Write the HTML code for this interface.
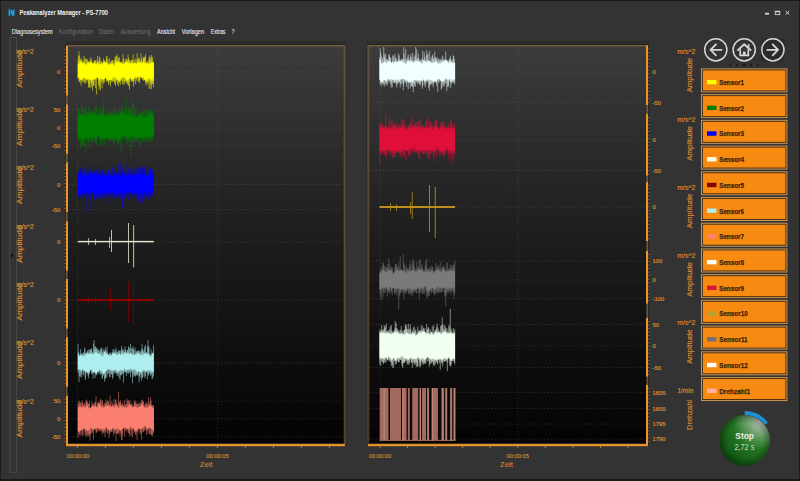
<!DOCTYPE html>
<html><head><meta charset="utf-8"><title>Peakanalyzer Manager</title>
<style>html,body{margin:0;padding:0;width:800px;height:481px;overflow:hidden;background:#333;font-family:"Liberation Sans",sans-serif}</style>
</head><body><svg width="800" height="481" viewBox="0 0 800 481" style="position:absolute;left:0;top:0;font-family:'Liberation Sans',sans-serif"><rect width="800" height="481" fill="#333333"/><rect x="0" y="0" width="800" height="1" fill="#1b1b1b"/><rect x="799" y="0" width="1" height="481" fill="#1b1b1b"/><rect x="0" y="479" width="800" height="2" fill="#1b1b1b"/><rect x="0" y="0" width="1" height="481" fill="#1b1b1b"/><rect x="8" y="9" width="7.3" height="6.8" fill="#1a5878"/><path d="M9.4 15.5 V10.2 M10.8 10.2 L12.2 14.2 L13.6 10.2 V15.5" stroke="#3c9fc8" stroke-width="1.2" fill="none"/><rect x="8.2" y="8.3" width="1" height="1.2" fill="#8a3a3a"/><text x="19.5" y="14.6" font-size="6.8" fill="#f2f2f2" font-weight="bold" text-anchor="start" textLength="88.5" lengthAdjust="spacingAndGlyphs" >Peakanalyzer Manager - PS-7700</text><rect x="765" y="12.8" width="4" height="1.8" fill="#d8d8d8"/><rect x="775.2" y="11.2" width="4.6" height="3.4" fill="none" stroke="#d0d0d0" stroke-width="0.9"/><rect x="775" y="11" width="5" height="1.3" fill="#d0d0d0"/><path d="M785.7 11 L789.3 14.5 M789.3 11 L785.7 14.5" stroke="#d8d8d8" stroke-width="1"/><text x="11.8" y="33.9" font-size="6.4" fill="#e6e6e6" font-weight="normal" text-anchor="start" textLength="40.8" lengthAdjust="spacingAndGlyphs" stroke="#e6e6e6" stroke-width="0.12" >Diagnosesystem</text><text x="58.8" y="33.9" font-size="6.4" fill="#727272" font-weight="normal" text-anchor="start" textLength="34.2" lengthAdjust="spacingAndGlyphs" >Konfiguration</text><text x="99.2" y="33.9" font-size="6.4" fill="#727272" font-weight="normal" text-anchor="start" textLength="15.0" lengthAdjust="spacingAndGlyphs" >Daten</text><text x="120.7" y="33.9" font-size="6.4" fill="#727272" font-weight="normal" text-anchor="start" textLength="30.0" lengthAdjust="spacingAndGlyphs" >Auswertung</text><text x="157" y="33.9" font-size="6.4" fill="#e6e6e6" font-weight="normal" text-anchor="start" textLength="18" lengthAdjust="spacingAndGlyphs" stroke="#e6e6e6" stroke-width="0.12" >Ansicht</text><text x="181.7" y="33.9" font-size="6.4" fill="#e6e6e6" font-weight="normal" text-anchor="start" textLength="22.5" lengthAdjust="spacingAndGlyphs" stroke="#e6e6e6" stroke-width="0.12" >Vorlagen</text><text x="210.7" y="33.9" font-size="6.4" fill="#e6e6e6" font-weight="normal" text-anchor="start" textLength="14.8" lengthAdjust="spacingAndGlyphs" stroke="#e6e6e6" stroke-width="0.12" >Extras</text><text x="231.7" y="33.9" font-size="6.4" fill="#e6e6e6" font-weight="normal" text-anchor="start" textLength="2.6" lengthAdjust="spacingAndGlyphs" stroke="#e6e6e6" stroke-width="0.12" >?</text><rect x="9.8" y="37.5" width="6.7" height="435" fill="none" stroke="#484848" stroke-width="1"/><path d="M11 253.2 L14 255.3 L11 257.4 Z" fill="#111"/><linearGradient id="gl" x1="0" y1="0" x2="0" y2="1"><stop offset="0" stop-color="#3c3c3c"/><stop offset="0.45" stop-color="#1f1f1f"/><stop offset="1" stop-color="#030303"/></linearGradient><rect x="66" y="46" width="278.5" height="399" fill="url(#gl)"/><rect x="65" y="41" width="281.5" height="4" fill="#262626" opacity="0.45"/><rect x="65.5" y="44.5" width="280.5" height="401" fill="none" stroke="#262626" stroke-width="1"/><rect x="66.5" y="45.5" width="278.5" height="399" fill="none" stroke="#72593c" stroke-width="1"/><rect x="67.5" y="46.5" width="276.5" height="397" fill="none" stroke="#8a6a44" stroke-width="1" stroke-opacity="0.4"/><linearGradient id="gr" x1="0" y1="0" x2="0" y2="1"><stop offset="0" stop-color="#3c3c3c"/><stop offset="0.45" stop-color="#1f1f1f"/><stop offset="1" stop-color="#030303"/></linearGradient><rect x="367.5" y="46" width="279.5" height="399" fill="url(#gr)"/><rect x="366.5" y="41" width="282.5" height="4" fill="#262626" opacity="0.45"/><rect x="367.0" y="44.5" width="281.5" height="401" fill="none" stroke="#262626" stroke-width="1"/><rect x="368.0" y="45.5" width="279.5" height="399" fill="none" stroke="#72593c" stroke-width="1"/><rect x="369.0" y="46.5" width="277.5" height="397" fill="none" stroke="#8a6a44" stroke-width="1" stroke-opacity="0.4"/><line x1="69" y1="71.8" x2="342.5" y2="71.8" stroke="#8a8a8a" stroke-opacity="0.42" stroke-width="0.8" stroke-dasharray="0.9 2.4"/><line x1="69" y1="128.1" x2="342.5" y2="128.1" stroke="#8a8a8a" stroke-opacity="0.42" stroke-width="0.8" stroke-dasharray="0.9 2.4"/><line x1="69" y1="184.5" x2="342.5" y2="184.5" stroke="#8a8a8a" stroke-opacity="0.42" stroke-width="0.8" stroke-dasharray="0.9 2.4"/><line x1="69" y1="242" x2="342.5" y2="242" stroke="#8a8a8a" stroke-opacity="0.42" stroke-width="0.8" stroke-dasharray="0.9 2.4"/><line x1="69" y1="300" x2="342.5" y2="300" stroke="#8a8a8a" stroke-opacity="0.42" stroke-width="0.8" stroke-dasharray="0.9 2.4"/><line x1="69" y1="363" x2="342.5" y2="363" stroke="#8a8a8a" stroke-opacity="0.42" stroke-width="0.8" stroke-dasharray="0.9 2.4"/><line x1="69" y1="418.8" x2="342.5" y2="418.8" stroke="#8a8a8a" stroke-opacity="0.42" stroke-width="0.8" stroke-dasharray="0.9 2.4"/><line x1="69" y1="110" x2="342.5" y2="110" stroke="#8a8a8a" stroke-opacity="0.42" stroke-width="0.8" stroke-dasharray="0.9 2.4"/><line x1="69" y1="145.6" x2="342.5" y2="145.6" stroke="#8a8a8a" stroke-opacity="0.42" stroke-width="0.8" stroke-dasharray="0.9 2.4"/><line x1="69" y1="209.5" x2="342.5" y2="209.5" stroke="#8a8a8a" stroke-opacity="0.42" stroke-width="0.8" stroke-dasharray="0.9 2.4"/><line x1="69" y1="401.2" x2="342.5" y2="401.2" stroke="#8a8a8a" stroke-opacity="0.42" stroke-width="0.8" stroke-dasharray="0.9 2.4"/><line x1="69" y1="436.8" x2="342.5" y2="436.8" stroke="#8a8a8a" stroke-opacity="0.42" stroke-width="0.8" stroke-dasharray="0.9 2.4"/><line x1="77.6" y1="48" x2="77.6" y2="443" stroke="#8a8a8a" stroke-opacity="0.38" stroke-width="0.8" stroke-dasharray="0.9 2.4"/><line x1="217.6" y1="48" x2="217.6" y2="443" stroke="#8a8a8a" stroke-opacity="0.38" stroke-width="0.8" stroke-dasharray="0.9 2.4"/><line x1="369.5" y1="72" x2="645" y2="72" stroke="#8a8a8a" stroke-opacity="0.42" stroke-width="0.8" stroke-dasharray="0.9 2.4"/><line x1="369.5" y1="140" x2="645" y2="140" stroke="#8a8a8a" stroke-opacity="0.42" stroke-width="0.8" stroke-dasharray="0.9 2.4"/><line x1="369.5" y1="207" x2="645" y2="207" stroke="#8a8a8a" stroke-opacity="0.42" stroke-width="0.8" stroke-dasharray="0.9 2.4"/><line x1="369.5" y1="280" x2="645" y2="280" stroke="#8a8a8a" stroke-opacity="0.42" stroke-width="0.8" stroke-dasharray="0.9 2.4"/><line x1="369.5" y1="345.8" x2="645" y2="345.8" stroke="#8a8a8a" stroke-opacity="0.42" stroke-width="0.8" stroke-dasharray="0.9 2.4"/><line x1="369.5" y1="408.5" x2="645" y2="408.5" stroke="#8a8a8a" stroke-opacity="0.42" stroke-width="0.8" stroke-dasharray="0.9 2.4"/><line x1="369.5" y1="102.5" x2="645" y2="102.5" stroke="#8a8a8a" stroke-opacity="0.42" stroke-width="0.8" stroke-dasharray="0.9 2.4"/><line x1="369.5" y1="170.5" x2="645" y2="170.5" stroke="#8a8a8a" stroke-opacity="0.42" stroke-width="0.8" stroke-dasharray="0.9 2.4"/><line x1="369.5" y1="261" x2="645" y2="261" stroke="#8a8a8a" stroke-opacity="0.42" stroke-width="0.8" stroke-dasharray="0.9 2.4"/><line x1="369.5" y1="298.8" x2="645" y2="298.8" stroke="#8a8a8a" stroke-opacity="0.42" stroke-width="0.8" stroke-dasharray="0.9 2.4"/><line x1="369.5" y1="324.5" x2="645" y2="324.5" stroke="#8a8a8a" stroke-opacity="0.42" stroke-width="0.8" stroke-dasharray="0.9 2.4"/><line x1="369.5" y1="367.5" x2="645" y2="367.5" stroke="#8a8a8a" stroke-opacity="0.42" stroke-width="0.8" stroke-dasharray="0.9 2.4"/><line x1="369.5" y1="392.5" x2="645" y2="392.5" stroke="#8a8a8a" stroke-opacity="0.42" stroke-width="0.8" stroke-dasharray="0.9 2.4"/><line x1="369.5" y1="424" x2="645" y2="424" stroke="#8a8a8a" stroke-opacity="0.42" stroke-width="0.8" stroke-dasharray="0.9 2.4"/><line x1="369.5" y1="439.2" x2="645" y2="439.2" stroke="#8a8a8a" stroke-opacity="0.42" stroke-width="0.8" stroke-dasharray="0.9 2.4"/><line x1="380" y1="48" x2="380" y2="443" stroke="#8a8a8a" stroke-opacity="0.38" stroke-width="0.8" stroke-dasharray="0.9 2.4"/><line x1="517.8" y1="48" x2="517.8" y2="443" stroke="#8a8a8a" stroke-opacity="0.38" stroke-width="0.8" stroke-dasharray="0.9 2.4"/><clipPath id="cl"><rect x="66" y="47" width="278" height="397"/></clipPath><clipPath id="cr"><rect x="369" y="47" width="277" height="397"/></clipPath><g clip-path="url(#cl)"><path d="M77.80 64.0 L78.05 64.0 L78.55 63.7 L79.05 63.0 L79.55 63.5 L80.05 61.6 L80.55 61.3 L81.05 62.8 L81.55 63.1 L82.05 63.1 L82.55 63.5 L83.05 62.8 L83.55 63.0 L84.05 64.1 L84.55 63.4 L85.05 64.3 L85.55 65.1 L86.05 65.1 L86.55 64.4 L87.05 63.3 L87.55 63.5 L88.05 63.1 L88.55 63.0 L89.05 63.5 L89.55 63.2 L90.05 61.2 L90.55 61.5 L91.05 63.0 L91.55 62.2 L92.05 63.1 L92.55 63.4 L93.05 63.0 L93.55 63.6 L94.05 63.6 L94.55 62.9 L95.05 64.8 L95.55 63.0 L96.05 64.3 L96.55 64.2 L97.05 63.5 L97.55 63.0 L98.05 64.6 L98.55 63.6 L99.05 64.7 L99.55 64.0 L100.05 62.9 L100.55 64.0 L101.05 64.7 L101.55 63.9 L102.05 64.2 L102.55 65.1 L103.05 62.9 L103.55 62.8 L104.05 62.5 L104.55 61.5 L105.05 62.5 L105.55 62.9 L106.05 63.1 L106.55 62.8 L107.05 63.3 L107.55 64.3 L108.05 64.5 L108.55 64.9 L109.05 64.5 L109.55 64.7 L110.05 64.3 L110.55 64.2 L111.05 63.9 L111.55 63.4 L112.05 63.1 L112.55 64.3 L113.05 63.9 L113.55 65.1 L114.05 65.9 L114.55 64.9 L115.05 63.5 L115.55 63.1 L116.05 62.8 L116.55 61.7 L117.05 61.5 L117.55 61.9 L118.05 61.4 L118.55 61.8 L119.05 62.2 L119.55 62.6 L120.05 63.5 L120.55 62.3 L121.05 63.5 L121.55 62.7 L122.05 63.9 L122.55 64.2 L123.05 64.0 L123.55 63.8 L124.05 64.2 L124.55 62.9 L125.05 62.4 L125.55 62.3 L126.05 63.0 L126.55 62.3 L127.05 62.3 L127.55 62.0 L128.05 61.7 L128.55 63.5 L129.05 62.2 L129.55 63.1 L130.05 64.9 L130.55 63.5 L131.05 61.2 L131.55 62.2 L132.05 64.0 L132.55 62.5 L133.05 62.8 L133.55 63.9 L134.05 63.2 L134.55 63.1 L135.05 62.5 L135.55 64.2 L136.05 62.1 L136.55 64.2 L137.05 62.9 L137.55 62.5 L138.05 61.8 L138.55 61.5 L139.05 63.3 L139.55 62.9 L140.05 62.7 L140.55 62.1 L141.05 62.2 L141.55 62.6 L142.05 62.7 L142.55 63.0 L143.05 62.1 L143.55 61.1 L144.05 61.8 L144.55 63.1 L145.05 62.7 L145.55 62.9 L146.05 64.3 L146.55 63.0 L147.05 61.6 L147.55 63.2 L148.05 64.1 L148.55 63.7 L149.05 63.2 L149.55 64.1 L150.05 63.7 L150.55 63.6 L151.05 62.4 L151.55 62.5 L152.05 63.2 L152.55 62.3 L153.05 62.5 L153.55 62.9 L153.80 62.9 L153.80 80.6 L153.55 80.6 L153.05 81.0 L152.55 78.5 L152.05 79.1 L151.55 80.7 L151.05 78.1 L150.55 79.8 L150.05 81.0 L149.55 77.6 L149.05 78.4 L148.55 78.9 L148.05 79.3 L147.55 78.5 L147.05 79.4 L146.55 80.7 L146.05 80.6 L145.55 80.1 L145.05 80.4 L144.55 79.3 L144.05 78.8 L143.55 77.0 L143.05 77.1 L142.55 77.6 L142.05 77.5 L141.55 77.9 L141.05 76.7 L140.55 76.5 L140.05 77.1 L139.55 77.4 L139.05 77.6 L138.55 77.0 L138.05 75.8 L137.55 77.0 L137.05 77.3 L136.55 78.1 L136.05 77.6 L135.55 76.1 L135.05 77.8 L134.55 77.7 L134.05 78.1 L133.55 79.1 L133.05 80.4 L132.55 79.3 L132.05 78.8 L131.55 79.0 L131.05 79.0 L130.55 77.1 L130.05 77.2 L129.55 79.2 L129.05 79.0 L128.55 78.9 L128.05 80.6 L127.55 80.7 L127.05 80.3 L126.55 80.1 L126.05 79.4 L125.55 78.2 L125.05 78.6 L124.55 78.2 L124.05 77.4 L123.55 77.6 L123.05 76.7 L122.55 77.5 L122.05 77.5 L121.55 78.1 L121.05 78.5 L120.55 80.2 L120.05 79.3 L119.55 81.4 L119.05 81.0 L118.55 79.5 L118.05 80.0 L117.55 79.5 L117.05 79.4 L116.55 79.7 L116.05 78.2 L115.55 78.0 L115.05 77.5 L114.55 76.9 L114.05 77.3 L113.55 78.0 L113.05 76.7 L112.55 80.0 L112.05 78.6 L111.55 80.1 L111.05 79.5 L110.55 79.9 L110.05 79.2 L109.55 80.2 L109.05 80.5 L108.55 80.3 L108.05 80.0 L107.55 78.8 L107.05 79.7 L106.55 79.4 L106.05 77.5 L105.55 77.8 L105.05 78.6 L104.55 79.3 L104.05 78.7 L103.55 79.7 L103.05 80.8 L102.55 78.7 L102.05 79.2 L101.55 78.9 L101.05 78.8 L100.55 78.3 L100.05 79.1 L99.55 79.3 L99.05 79.8 L98.55 78.1 L98.05 77.7 L97.55 77.7 L97.05 76.8 L96.55 77.1 L96.05 78.6 L95.55 78.3 L95.05 78.7 L94.55 79.4 L94.05 79.7 L93.55 79.3 L93.05 80.0 L92.55 79.3 L92.05 80.1 L91.55 80.5 L91.05 81.6 L90.55 79.1 L90.05 80.3 L89.55 79.5 L89.05 79.2 L88.55 79.0 L88.05 79.8 L87.55 79.3 L87.05 79.4 L86.55 79.7 L86.05 78.7 L85.55 77.4 L85.05 78.5 L84.55 76.9 L84.05 78.2 L83.55 77.4 L83.05 78.5 L82.55 78.8 L82.05 79.0 L81.55 79.8 L81.05 80.0 L80.55 79.4 L80.05 80.0 L79.55 79.1 L79.05 76.8 L78.55 77.2 L78.05 78.1 L77.80 78.1 Z" fill="#ffff00"/><path d="M78.05 60.1V78.5M78.55 55.4V78.7M79.05 51.6V81.7M79.55 56.2V81.0M80.05 60.2V83.0M80.55 60.1V80.2M81.05 57.7V85.8M81.55 59.3V80.9M82.05 60.0V79.6M82.55 62.1V82.2M83.05 62.3V79.8M83.55 61.2V82.0M84.05 55.9V78.5M84.55 58.9V83.7M85.05 62.2V79.3M85.55 58.0V81.6M86.05 63.9V83.3M86.55 59.0V80.6M87.05 59.1V79.4M87.55 60.2V79.4M88.05 62.1V82.8M88.55 61.1V87.7M89.05 61.6V85.3M89.55 62.5V87.3M90.05 58.5V87.9M90.55 61.3V80.2M91.05 57.3V83.8M91.55 60.1V87.4M92.05 62.8V83.4M92.55 62.7V91.0M93.05 62.3V85.9M93.55 63.4V86.2M94.05 60.5V85.5M94.55 60.8V79.8M95.05 60.1V79.2M95.55 60.4V88.3M96.05 62.1V79.2M96.55 63.1V94.4M97.05 60.1V78.0M97.55 55.8V77.8M98.05 61.7V79.8M98.55 60.7V84.8M99.05 62.5V89.6M99.55 56.5V86.9M100.05 57.9V82.9M100.55 63.9V90.1M101.05 60.8V79.4M101.55 61.9V81.9M102.05 61.8V88.2M102.55 62.8V79.4M103.05 62.6V84.1M103.55 58.3V82.4M104.05 60.3V79.2M104.55 61.1V82.6M105.05 61.4V79.2M105.55 62.9V77.9M106.05 59.9V78.1M106.55 56.4V81.8M107.05 56.0V81.5M107.55 62.0V81.1M108.05 58.9V80.9M108.55 63.3V84.9M109.05 64.2V83.7M109.55 58.3V80.3M110.05 64.1V80.3M110.55 62.1V86.6M111.05 62.5V82.3M111.55 60.6V80.2M112.05 60.5V82.0M112.55 60.3V81.6M113.05 60.4V78.3M113.55 62.9V81.6M114.05 65.1V81.3M114.55 59.9V83.2M115.05 56.8V84.4M115.55 56.5V85.9M116.05 59.9V79.8M116.55 55.9V81.3M117.05 54.2V79.6M117.55 61.4V84.3M118.05 56.8V82.2M118.55 58.5V86.1M119.05 61.9V82.7M119.55 57.2V82.6M120.05 63.4V81.1M120.55 61.8V84.7M121.05 62.4V80.3M121.55 62.5V81.0M122.05 60.5V79.3M122.55 62.0V83.3M123.05 54.2V84.7M123.55 58.2V78.5M124.05 63.7V84.8M124.55 62.1V82.3M125.05 59.2V80.9M125.55 61.2V80.9M126.05 58.7V82.8M126.55 59.3V82.0M127.05 59.5V83.8M127.55 61.3V83.5M128.05 54.3V85.6M128.55 57.5V86.2M129.05 60.1V81.8M129.55 59.4V89.8M130.05 63.5V77.3M130.55 62.3V79.3M131.05 59.9V81.4M131.55 59.9V81.3M132.05 63.9V80.0M132.55 59.9V82.0M133.05 54.5V81.9M133.55 63.3V86.5M134.05 60.1V81.3M134.55 62.0V79.1M135.05 58.3V77.9M135.55 63.3V84.0M136.05 59.9V78.9M136.55 64.1V80.6M137.05 53.2V77.4M137.55 59.9V77.7M138.05 58.1V82.4M138.55 57.7V80.9M139.05 60.3V80.7M139.55 58.3V83.1M140.05 61.3V80.1M140.55 61.9V76.8M141.05 53.1V77.4M141.55 58.6V78.0M142.05 60.2V79.0M142.55 62.9V80.1M143.05 56.8V79.1M143.55 58.3V80.7M144.05 56.7V80.2M144.55 57.6V79.8M145.05 56.6V80.6M145.55 54.2V82.8M146.05 64.1V85.4M146.55 62.8V81.9M147.05 60.8V82.7M147.55 62.6V84.7M148.05 63.9V82.5M148.55 60.9V81.5M149.05 57.1V88.7M149.55 57.8V80.2M150.05 55.3V89.4M150.55 61.1V83.6M151.05 58.1V84.7M151.55 55.2V88.9M152.05 60.9V82.6M152.55 57.0V84.4M153.05 62.4V83.9M153.55 61.5V87.3" fill="none" stroke="#ffff00" stroke-width="0.6" stroke-opacity="0.85"/><path d="M77.80 114.4 L78.05 114.4 L78.55 115.8 L79.05 115.9 L79.55 116.2 L80.05 115.4 L80.55 115.5 L81.05 116.2 L81.55 115.0 L82.05 115.6 L82.55 115.6 L83.05 115.4 L83.55 116.3 L84.05 115.2 L84.55 116.1 L85.05 114.5 L85.55 116.4 L86.05 115.3 L86.55 115.5 L87.05 116.2 L87.55 117.6 L88.05 115.0 L88.55 115.0 L89.05 115.0 L89.55 113.8 L90.05 114.9 L90.55 113.2 L91.05 114.4 L91.55 113.0 L92.05 115.0 L92.55 115.1 L93.05 115.6 L93.55 114.9 L94.05 114.4 L94.55 115.3 L95.05 113.7 L95.55 114.8 L96.05 114.6 L96.55 116.1 L97.05 116.5 L97.55 118.3 L98.05 116.7 L98.55 114.8 L99.05 115.1 L99.55 115.0 L100.05 115.1 L100.55 115.2 L101.05 115.4 L101.55 115.1 L102.05 115.3 L102.55 115.1 L103.05 114.7 L103.55 114.9 L104.05 114.5 L104.55 115.1 L105.05 115.8 L105.55 116.5 L106.05 117.4 L106.55 115.5 L107.05 115.6 L107.55 114.6 L108.05 114.3 L108.55 115.2 L109.05 115.5 L109.55 115.4 L110.05 116.5 L110.55 115.7 L111.05 114.8 L111.55 115.3 L112.05 115.4 L112.55 115.1 L113.05 114.8 L113.55 114.0 L114.05 115.1 L114.55 116.5 L115.05 116.9 L115.55 115.5 L116.05 116.9 L116.55 115.5 L117.05 113.7 L117.55 115.4 L118.05 115.9 L118.55 115.3 L119.05 115.3 L119.55 114.9 L120.05 113.5 L120.55 113.3 L121.05 112.4 L121.55 113.6 L122.05 112.6 L122.55 112.8 L123.05 114.0 L123.55 115.1 L124.05 113.6 L124.55 114.7 L125.05 114.3 L125.55 114.0 L126.05 114.0 L126.55 114.6 L127.05 115.0 L127.55 114.7 L128.05 114.9 L128.55 115.5 L129.05 115.8 L129.55 116.4 L130.05 116.9 L130.55 115.9 L131.05 115.3 L131.55 114.3 L132.05 114.6 L132.55 114.8 L133.05 116.2 L133.55 114.8 L134.05 116.5 L134.55 117.6 L135.05 117.6 L135.55 116.8 L136.05 116.6 L136.55 116.8 L137.05 115.7 L137.55 117.3 L138.05 116.2 L138.55 117.0 L139.05 116.8 L139.55 115.3 L140.05 114.4 L140.55 114.4 L141.05 113.9 L141.55 114.0 L142.05 115.0 L142.55 115.7 L143.05 116.7 L143.55 116.6 L144.05 116.6 L144.55 115.8 L145.05 116.4 L145.55 117.2 L146.05 117.5 L146.55 116.1 L147.05 116.2 L147.55 116.1 L148.05 116.0 L148.55 116.2 L149.05 116.2 L149.55 115.7 L150.05 115.1 L150.55 113.1 L151.05 112.9 L151.55 113.2 L152.05 113.9 L152.55 113.9 L153.05 115.2 L153.55 115.8 L153.80 115.8 L153.80 135.7 L153.55 135.7 L153.05 135.5 L152.55 135.9 L152.05 136.0 L151.55 136.4 L151.05 136.9 L150.55 137.1 L150.05 136.3 L149.55 137.6 L149.05 136.9 L148.55 137.7 L148.05 136.3 L147.55 137.5 L147.05 135.8 L146.55 136.8 L146.05 137.0 L145.55 137.0 L145.05 136.3 L144.55 137.2 L144.05 136.4 L143.55 137.0 L143.05 136.8 L142.55 138.5 L142.05 137.2 L141.55 136.3 L141.05 136.2 L140.55 136.6 L140.05 136.9 L139.55 136.5 L139.05 137.3 L138.55 137.5 L138.05 137.2 L137.55 136.8 L137.05 137.1 L136.55 137.2 L136.05 135.9 L135.55 136.4 L135.05 135.7 L134.55 136.3 L134.05 136.9 L133.55 137.4 L133.05 136.7 L132.55 137.9 L132.05 136.0 L131.55 136.2 L131.05 135.3 L130.55 137.0 L130.05 136.0 L129.55 137.6 L129.05 137.4 L128.55 137.7 L128.05 137.9 L127.55 137.4 L127.05 136.1 L126.55 136.1 L126.05 135.5 L125.55 136.6 L125.05 136.9 L124.55 136.2 L124.05 136.8 L123.55 136.6 L123.05 134.8 L122.55 135.5 L122.05 135.3 L121.55 135.3 L121.05 138.5 L120.55 137.1 L120.05 138.5 L119.55 139.7 L119.05 138.4 L118.55 138.5 L118.05 138.7 L117.55 138.2 L117.05 138.1 L116.55 138.1 L116.05 137.1 L115.55 137.2 L115.05 137.9 L114.55 136.9 L114.05 137.7 L113.55 139.4 L113.05 140.0 L112.55 138.2 L112.05 138.1 L111.55 139.1 L111.05 140.1 L110.55 138.2 L110.05 139.8 L109.55 137.5 L109.05 137.9 L108.55 138.3 L108.05 137.2 L107.55 136.7 L107.05 136.5 L106.55 137.3 L106.05 138.1 L105.55 138.4 L105.05 137.7 L104.55 138.3 L104.05 139.0 L103.55 137.8 L103.05 138.9 L102.55 137.2 L102.05 136.3 L101.55 136.3 L101.05 137.5 L100.55 138.1 L100.05 137.0 L99.55 137.2 L99.05 136.6 L98.55 134.8 L98.05 135.8 L97.55 136.8 L97.05 135.7 L96.55 137.9 L96.05 138.7 L95.55 139.0 L95.05 137.3 L94.55 137.9 L94.05 136.4 L93.55 137.2 L93.05 138.2 L92.55 137.8 L92.05 139.1 L91.55 139.2 L91.05 139.5 L90.55 137.0 L90.05 137.4 L89.55 139.6 L89.05 138.0 L88.55 138.5 L88.05 137.8 L87.55 138.2 L87.05 137.8 L86.55 137.6 L86.05 138.1 L85.55 137.9 L85.05 137.0 L84.55 138.6 L84.05 138.2 L83.55 138.6 L83.05 139.2 L82.55 139.7 L82.05 139.0 L81.55 140.1 L81.05 138.1 L80.55 138.7 L80.05 136.9 L79.55 136.9 L79.05 136.9 L78.55 136.9 L78.05 135.9 L77.80 135.9 Z" fill="#008000"/><path d="M78.05 112.6V141.3M78.55 108.1V140.4M79.05 110.7V139.7M79.55 111.8V141.0M80.05 113.1V141.0M80.55 114.0V148.1M81.05 113.2V139.4M81.55 103.0V147.9M82.05 113.5V144.2M82.55 107.1V145.2M83.05 113.6V143.7M83.55 108.2V146.4M84.05 114.6V141.4M84.55 114.2V146.8M85.05 104.8V139.5M85.55 110.2V138.5M86.05 111.0V152.1M86.55 109.5V140.0M87.05 113.2V141.0M87.55 111.4V139.7M88.05 112.1V142.9M88.55 106.9V142.4M89.05 112.6V141.3M89.55 106.9V147.8M90.05 111.8V138.9M90.55 112.1V138.5M91.05 111.6V140.8M91.55 112.8V146.4M92.05 114.6V142.2M92.55 109.4V138.7M93.05 112.0V142.4M93.55 110.7V137.2M94.05 111.2V140.7M94.55 112.0V141.6M95.05 106.8V139.7M95.55 114.0V143.9M96.05 104.5V143.9M96.55 108.2V145.3M97.05 114.4V139.4M97.55 118.0V138.0M98.05 116.0V136.9M98.55 112.5V135.6M99.05 109.0V140.5M99.55 112.4V137.5M100.05 114.0V139.8M100.55 109.2V144.8M101.05 112.1V142.5M101.55 113.4V139.6M102.05 109.9V143.2M102.55 113.0V140.5M103.05 97.6V146.7M103.55 111.4V138.3M104.05 104.7V139.1M104.55 114.6V145.1M105.05 115.6V137.9M105.55 114.0V140.0M106.05 116.7V140.9M106.55 115.1V140.2M107.05 115.1V138.0M107.55 113.2V140.3M108.05 110.2V139.8M108.55 113.4V140.2M109.05 110.6V139.7M109.55 112.4V143.6M110.05 111.7V141.3M110.55 112.7V138.8M111.05 112.9V140.4M111.55 110.7V141.5M112.05 113.3V138.7M112.55 113.2V139.5M113.05 114.8V142.6M113.55 111.2V143.8M114.05 114.9V141.6M114.55 110.2V144.6M115.05 116.8V142.4M115.55 106.6V139.3M116.05 111.2V139.4M116.55 113.3V140.8M117.05 111.3V140.3M117.55 113.3V144.1M118.05 115.4V143.5M118.55 114.1V142.8M119.05 112.1V143.3M119.55 109.6V141.1M120.05 112.6V143.6M120.55 111.3V139.5M121.05 110.3V151.9M121.55 109.6V137.0M122.05 105.8V137.1M122.55 106.6V141.1M123.05 113.7V139.7M123.55 114.8V136.9M124.05 109.6V138.8M124.55 110.2V137.6M125.05 111.4V139.4M125.55 112.5V139.9M126.05 110.6V137.3M126.55 98.5V144.1M127.05 108.5V139.7M127.55 113.0V141.3M128.05 112.6V142.6M128.55 107.6V141.6M129.05 111.9V137.5M129.55 108.5V138.7M130.05 111.3V147.8M130.55 110.8V137.3M131.05 107.0V156.0M131.55 109.9V142.4M132.05 113.2V138.5M132.55 100.4V140.7M133.05 116.1V138.8M133.55 103.6V147.0M134.05 115.6V140.8M134.55 114.1V138.3M135.05 108.1V141.1M135.55 109.2V139.9M136.05 107.8V142.5M136.55 116.2V140.2M137.05 115.6V139.8M137.55 115.4V137.6M138.05 110.4V142.9M138.55 116.9V138.6M139.05 114.0V139.2M139.55 114.4V138.9M140.05 111.6V147.1M140.55 113.5V139.8M141.05 111.6V138.1M141.55 113.1V143.6M142.05 113.6V138.3M142.55 111.5V142.0M143.05 115.6V139.7M143.55 110.3V141.1M144.05 110.2V137.6M144.55 114.8V140.2M145.05 109.3V142.6M145.55 115.7V139.5M146.05 115.7V139.0M146.55 110.1V141.8M147.05 115.9V137.1M147.55 110.2V142.4M148.05 114.5V140.3M148.55 111.9V139.2M149.05 110.0V140.3M149.55 113.6V139.5M150.05 114.7V141.6M150.55 109.3V138.6M151.05 111.2V143.0M151.55 109.6V137.9M152.05 109.9V142.9M152.55 110.0V138.7M153.05 111.6V137.7M153.55 113.8V136.3" fill="none" stroke="#008000" stroke-width="0.6" stroke-opacity="0.85"/><path d="M77.80 174.7 L78.05 174.7 L78.55 174.2 L79.05 172.8 L79.55 173.1 L80.05 173.0 L80.55 173.2 L81.05 173.6 L81.55 173.1 L82.05 174.2 L82.55 174.6 L83.05 173.8 L83.55 174.9 L84.05 174.9 L84.55 174.7 L85.05 175.9 L85.55 176.8 L86.05 176.6 L86.55 177.3 L87.05 177.1 L87.55 176.6 L88.05 173.5 L88.55 174.1 L89.05 173.2 L89.55 174.2 L90.05 172.9 L90.55 173.2 L91.05 173.9 L91.55 175.8 L92.05 174.3 L92.55 173.4 L93.05 173.8 L93.55 176.6 L94.05 174.7 L94.55 174.2 L95.05 175.3 L95.55 175.7 L96.05 175.4 L96.55 174.4 L97.05 174.5 L97.55 175.3 L98.05 174.7 L98.55 174.5 L99.05 174.9 L99.55 173.7 L100.05 175.3 L100.55 175.6 L101.05 174.5 L101.55 175.9 L102.05 176.0 L102.55 176.0 L103.05 175.2 L103.55 175.4 L104.05 174.3 L104.55 174.3 L105.05 175.0 L105.55 175.1 L106.05 176.9 L106.55 175.7 L107.05 176.1 L107.55 176.5 L108.05 175.8 L108.55 175.2 L109.05 174.0 L109.55 174.7 L110.05 174.8 L110.55 175.4 L111.05 175.1 L111.55 176.6 L112.05 177.2 L112.55 176.0 L113.05 175.9 L113.55 175.0 L114.05 175.4 L114.55 174.2 L115.05 175.6 L115.55 175.1 L116.05 175.9 L116.55 175.9 L117.05 176.4 L117.55 175.6 L118.05 174.9 L118.55 175.3 L119.05 175.5 L119.55 174.7 L120.05 176.0 L120.55 174.8 L121.05 173.5 L121.55 172.8 L122.05 173.0 L122.55 172.8 L123.05 173.4 L123.55 174.8 L124.05 174.1 L124.55 176.0 L125.05 175.5 L125.55 176.2 L126.05 176.5 L126.55 175.7 L127.05 173.9 L127.55 174.1 L128.05 175.0 L128.55 174.3 L129.05 175.7 L129.55 175.6 L130.05 175.5 L130.55 174.6 L131.05 174.0 L131.55 174.7 L132.05 175.2 L132.55 175.4 L133.05 175.8 L133.55 174.9 L134.05 174.8 L134.55 174.9 L135.05 175.3 L135.55 176.2 L136.05 175.2 L136.55 175.2 L137.05 174.6 L137.55 175.0 L138.05 174.4 L138.55 173.9 L139.05 173.2 L139.55 174.1 L140.05 173.0 L140.55 175.0 L141.05 176.4 L141.55 175.4 L142.05 174.9 L142.55 174.1 L143.05 174.3 L143.55 173.4 L144.05 173.8 L144.55 174.2 L145.05 174.6 L145.55 175.3 L146.05 176.1 L146.55 175.8 L147.05 176.5 L147.55 176.6 L148.05 176.3 L148.55 175.8 L149.05 175.1 L149.55 174.0 L150.05 173.9 L150.55 172.6 L151.05 174.1 L151.55 174.3 L152.05 173.6 L152.55 173.8 L153.05 174.8 L153.55 175.5 L153.80 175.5 L153.80 191.4 L153.55 191.4 L153.05 189.6 L152.55 190.9 L152.05 191.4 L151.55 192.2 L151.05 192.2 L150.55 192.4 L150.05 193.0 L149.55 193.8 L149.05 192.8 L148.55 192.5 L148.05 193.2 L147.55 193.8 L147.05 193.6 L146.55 193.7 L146.05 192.8 L145.55 193.3 L145.05 192.5 L144.55 191.5 L144.05 192.9 L143.55 193.7 L143.05 193.8 L142.55 194.6 L142.05 195.3 L141.55 193.1 L141.05 193.1 L140.55 193.7 L140.05 193.5 L139.55 193.1 L139.05 194.1 L138.55 193.9 L138.05 192.9 L137.55 192.8 L137.05 192.5 L136.55 191.3 L136.05 192.0 L135.55 192.2 L135.05 191.9 L134.55 193.0 L134.05 193.7 L133.55 192.2 L133.05 192.0 L132.55 192.9 L132.05 192.3 L131.55 190.9 L131.05 193.6 L130.55 191.3 L130.05 191.7 L129.55 191.4 L129.05 192.2 L128.55 191.8 L128.05 192.7 L127.55 191.6 L127.05 191.1 L126.55 192.9 L126.05 192.7 L125.55 192.9 L125.05 193.9 L124.55 194.1 L124.05 192.6 L123.55 193.2 L123.05 193.2 L122.55 192.4 L122.05 193.3 L121.55 192.5 L121.05 192.8 L120.55 191.9 L120.05 192.7 L119.55 194.0 L119.05 193.3 L118.55 194.0 L118.05 192.8 L117.55 191.7 L117.05 192.6 L116.55 192.5 L116.05 192.7 L115.55 194.7 L115.05 194.9 L114.55 194.0 L114.05 194.2 L113.55 194.1 L113.05 193.1 L112.55 192.7 L112.05 193.3 L111.55 192.9 L111.05 192.5 L110.55 192.4 L110.05 191.6 L109.55 192.2 L109.05 193.4 L108.55 193.5 L108.05 193.3 L107.55 193.9 L107.05 191.9 L106.55 192.4 L106.05 192.7 L105.55 192.5 L105.05 192.8 L104.55 192.3 L104.05 192.0 L103.55 191.7 L103.05 192.3 L102.55 192.0 L102.05 193.5 L101.55 193.4 L101.05 194.0 L100.55 193.5 L100.05 193.6 L99.55 193.9 L99.05 195.9 L98.55 194.9 L98.05 194.7 L97.55 193.8 L97.05 194.2 L96.55 192.1 L96.05 193.6 L95.55 193.3 L95.05 194.8 L94.55 193.8 L94.05 194.5 L93.55 193.9 L93.05 193.1 L92.55 192.3 L92.05 192.6 L91.55 192.4 L91.05 191.5 L90.55 191.0 L90.05 191.6 L89.55 191.7 L89.05 194.0 L88.55 192.2 L88.05 193.0 L87.55 193.4 L87.05 191.9 L86.55 192.4 L86.05 194.1 L85.55 194.0 L85.05 193.9 L84.55 194.0 L84.05 192.3 L83.55 192.5 L83.05 193.7 L82.55 192.8 L82.05 192.9 L81.55 192.6 L81.05 193.5 L80.55 193.7 L80.05 194.6 L79.55 194.4 L79.05 193.6 L78.55 194.3 L78.05 194.2 L77.80 194.2 Z" fill="#0000ff"/><path d="M78.05 171.9V198.1M78.55 173.3V197.2M79.05 171.1V195.9M79.55 169.9V202.6M80.05 168.6V198.9M80.55 170.6V197.2M81.05 167.8V195.2M81.55 172.4V192.8M82.05 169.0V197.4M82.55 174.4V194.7M83.05 167.9V195.8M83.55 173.1V199.6M84.05 171.5V193.3M84.55 168.5V194.9M85.05 175.8V195.8M85.55 174.2V194.9M86.05 175.9V212.5M86.55 172.3V193.0M87.05 173.0V200.2M87.55 163.3V198.4M88.05 167.8V195.1M88.55 173.8V195.1M89.05 172.0V199.4M89.55 174.2V199.7M90.05 169.5V197.1M90.55 171.0V199.6M91.05 164.8V211.5M91.55 166.3V193.0M92.05 173.5V194.4M92.55 172.3V192.4M93.05 170.7V193.2M93.55 173.0V202.0M94.05 171.9V200.4M94.55 171.2V197.8M95.05 170.1V199.4M95.55 170.7V194.7M96.05 173.0V199.4M96.55 169.6V196.9M97.05 171.3V197.0M97.55 167.7V199.9M98.05 174.0V196.8M98.55 173.2V198.4M99.05 167.7V196.0M99.55 173.1V199.9M100.05 169.4V194.5M100.55 174.6V199.4M101.05 169.6V194.7M101.55 170.7V194.2M102.05 170.0V195.0M102.55 170.0V197.5M103.05 172.0V194.8M103.55 163.8V200.6M104.05 174.1V194.4M104.55 171.6V197.7M105.05 172.5V193.8M105.55 174.2V194.1M106.05 175.3V203.6M106.55 174.8V195.9M107.05 171.9V195.6M107.55 172.1V198.4M108.05 170.8V194.2M108.55 170.6V194.6M109.05 169.3V195.3M109.55 173.7V192.9M110.05 172.6V193.6M110.55 175.1V197.9M111.05 168.9V194.8M111.55 174.9V194.6M112.05 176.7V196.6M112.55 167.5V193.0M113.05 173.9V198.0M113.55 170.1V195.2M114.05 166.3V196.9M114.55 170.7V195.5M115.05 173.7V200.4M115.55 170.8V197.8M116.05 173.7V194.2M116.55 172.9V198.2M117.05 173.8V194.0M117.55 170.2V194.9M118.05 163.1V195.1M118.55 172.0V195.9M119.05 174.2V195.4M119.55 170.3V198.2M120.05 175.4V197.2M120.55 162.1V198.5M121.05 173.4V197.8M121.55 168.4V195.6M122.05 171.3V198.1M122.55 167.0V208.7M123.05 173.3V200.3M123.55 173.0V193.9M124.05 169.1V193.7M124.55 173.5V197.5M125.05 171.4V201.1M125.55 174.6V194.4M126.05 173.8V197.3M126.55 175.1V195.0M127.05 163.6V192.1M127.55 173.2V198.7M128.05 171.4V193.2M128.55 168.1V199.9M129.05 174.5V192.4M129.55 173.8V199.8M130.05 173.9V192.7M130.55 173.3V193.3M131.05 166.3V193.7M131.55 174.7V197.0M132.05 169.5V196.1M132.55 175.4V195.2M133.05 172.0V198.8M133.55 172.4V194.8M134.05 167.4V195.2M134.55 171.8V193.8M135.05 169.4V196.6M135.55 174.7V193.2M136.05 167.7V198.5M136.55 173.4V195.5M137.05 169.5V199.1M137.55 173.6V197.3M138.05 166.7V194.9M138.55 172.5V202.8M139.05 168.3V195.5M139.55 173.9V193.1M140.05 173.0V197.5M140.55 168.0V200.6M141.05 166.2V196.9M141.55 169.0V194.0M142.05 167.3V198.2M142.55 168.8V202.9M143.05 165.7V196.4M143.55 167.8V198.2M144.05 169.4V194.1M144.55 166.1V199.0M145.05 167.4V196.2M145.55 173.5V195.1M146.05 174.8V196.8M146.55 173.1V194.7M147.05 173.2V196.3M147.55 168.8V196.3M148.05 176.1V198.1M148.55 169.5V199.8M149.05 175.0V194.1M149.55 173.4V197.0M150.05 167.2V197.0M150.55 168.2V197.4M151.05 171.8V195.8M151.55 169.2V193.3M152.05 169.5V193.2M152.55 169.2V194.1M153.05 171.1V194.8M153.55 175.1V199.4" fill="none" stroke="#0000ff" stroke-width="0.6" stroke-opacity="0.85"/><path d="M77.80 353.5 L78.05 353.5 L78.55 354.0 L79.05 356.1 L79.55 355.7 L80.05 356.2 L80.55 354.5 L81.05 355.4 L81.55 355.2 L82.05 354.3 L82.55 355.9 L83.05 356.2 L83.55 356.3 L84.05 356.5 L84.55 356.0 L85.05 354.1 L85.55 354.9 L86.05 354.1 L86.55 353.7 L87.05 353.7 L87.55 353.8 L88.05 352.9 L88.55 353.6 L89.05 354.2 L89.55 354.8 L90.05 354.0 L90.55 354.1 L91.05 353.8 L91.55 353.3 L92.05 354.0 L92.55 354.4 L93.05 354.6 L93.55 353.9 L94.05 353.4 L94.55 353.7 L95.05 352.8 L95.55 352.4 L96.05 351.5 L96.55 353.1 L97.05 352.9 L97.55 352.5 L98.05 354.3 L98.55 354.4 L99.05 352.7 L99.55 354.0 L100.05 354.1 L100.55 354.6 L101.05 355.5 L101.55 355.8 L102.05 357.0 L102.55 356.1 L103.05 355.6 L103.55 354.8 L104.05 352.9 L104.55 351.8 L105.05 351.8 L105.55 352.7 L106.05 353.8 L106.55 354.3 L107.05 354.3 L107.55 354.2 L108.05 355.3 L108.55 355.0 L109.05 355.8 L109.55 355.4 L110.05 355.9 L110.55 354.4 L111.05 355.0 L111.55 355.7 L112.05 353.3 L112.55 353.5 L113.05 354.2 L113.55 353.9 L114.05 353.4 L114.55 353.2 L115.05 353.5 L115.55 352.9 L116.05 353.5 L116.55 355.3 L117.05 354.9 L117.55 355.4 L118.05 353.9 L118.55 353.8 L119.05 353.5 L119.55 353.5 L120.05 354.3 L120.55 354.9 L121.05 354.2 L121.55 352.9 L122.05 352.3 L122.55 354.0 L123.05 354.4 L123.55 354.7 L124.05 354.6 L124.55 353.3 L125.05 353.0 L125.55 353.7 L126.05 353.1 L126.55 353.1 L127.05 354.3 L127.55 353.7 L128.05 353.3 L128.55 353.9 L129.05 354.1 L129.55 354.3 L130.05 353.0 L130.55 353.6 L131.05 354.1 L131.55 354.5 L132.05 354.4 L132.55 354.7 L133.05 355.0 L133.55 354.3 L134.05 354.7 L134.55 355.7 L135.05 355.0 L135.55 354.5 L136.05 354.9 L136.55 354.7 L137.05 353.3 L137.55 352.8 L138.05 352.9 L138.55 353.1 L139.05 354.2 L139.55 354.7 L140.05 355.3 L140.55 356.0 L141.05 354.0 L141.55 354.8 L142.05 355.4 L142.55 354.6 L143.05 355.3 L143.55 354.5 L144.05 353.2 L144.55 354.0 L145.05 353.7 L145.55 353.1 L146.05 354.8 L146.55 353.6 L147.05 354.2 L147.55 354.5 L148.05 354.1 L148.55 353.9 L149.05 354.4 L149.55 356.0 L150.05 356.4 L150.55 357.0 L151.05 355.6 L151.55 356.3 L152.05 354.9 L152.55 353.5 L153.05 353.0 L153.55 353.6 L153.80 353.6 L153.80 372.3 L153.55 372.3 L153.05 371.5 L152.55 372.4 L152.05 371.4 L151.55 371.5 L151.05 371.7 L150.55 370.7 L150.05 370.0 L149.55 369.9 L149.05 370.4 L148.55 369.9 L148.05 371.7 L147.55 370.1 L147.05 370.2 L146.55 370.9 L146.05 371.4 L145.55 370.9 L145.05 371.4 L144.55 369.7 L144.05 369.9 L143.55 369.3 L143.05 370.4 L142.55 370.7 L142.05 372.7 L141.55 371.6 L141.05 371.5 L140.55 372.1 L140.05 372.2 L139.55 372.2 L139.05 371.8 L138.55 371.6 L138.05 371.1 L137.55 371.4 L137.05 372.5 L136.55 371.5 L136.05 371.1 L135.55 370.2 L135.05 369.6 L134.55 369.1 L134.05 369.1 L133.55 369.0 L133.05 370.6 L132.55 369.2 L132.05 370.2 L131.55 370.0 L131.05 368.1 L130.55 368.5 L130.05 369.0 L129.55 369.3 L129.05 369.8 L128.55 369.4 L128.05 369.9 L127.55 370.2 L127.05 369.5 L126.55 370.4 L126.05 369.8 L125.55 370.6 L125.05 369.0 L124.55 368.6 L124.05 368.5 L123.55 370.2 L123.05 370.7 L122.55 370.9 L122.05 370.1 L121.55 370.4 L121.05 369.2 L120.55 370.3 L120.05 369.7 L119.55 370.0 L119.05 371.2 L118.55 372.2 L118.05 371.2 L117.55 371.6 L117.05 371.2 L116.55 370.2 L116.05 369.9 L115.55 368.7 L115.05 370.2 L114.55 369.6 L114.05 370.2 L113.55 370.5 L113.05 370.7 L112.55 370.9 L112.05 369.6 L111.55 370.6 L111.05 370.2 L110.55 369.5 L110.05 370.3 L109.55 369.5 L109.05 368.9 L108.55 369.7 L108.05 368.5 L107.55 369.6 L107.05 370.0 L106.55 370.7 L106.05 371.1 L105.55 371.7 L105.05 371.7 L104.55 373.4 L104.05 373.5 L103.55 373.7 L103.05 373.6 L102.55 372.0 L102.05 372.6 L101.55 372.0 L101.05 370.7 L100.55 371.1 L100.05 371.3 L99.55 369.5 L99.05 370.6 L98.55 370.6 L98.05 371.6 L97.55 371.1 L97.05 372.5 L96.55 373.1 L96.05 373.0 L95.55 373.5 L95.05 372.7 L94.55 371.7 L94.05 371.6 L93.55 372.1 L93.05 372.0 L92.55 371.8 L92.05 370.5 L91.55 369.8 L91.05 368.8 L90.55 369.8 L90.05 370.0 L89.55 371.7 L89.05 372.7 L88.55 372.8 L88.05 372.2 L87.55 372.9 L87.05 372.2 L86.55 371.0 L86.05 371.0 L85.55 372.1 L85.05 372.1 L84.55 370.4 L84.05 370.5 L83.55 370.5 L83.05 368.8 L82.55 369.1 L82.05 370.4 L81.55 370.2 L81.05 370.1 L80.55 369.6 L80.05 369.8 L79.55 369.2 L79.05 369.3 L78.55 368.4 L78.05 370.2 L77.80 370.2 Z" fill="#b0eeee"/><path d="M78.05 343.7V372.6M78.55 351.5V370.0M79.05 353.3V382.0M79.55 355.5V376.4M80.05 355.4V373.1M80.55 349.1V376.9M81.05 353.8V371.9M81.55 354.1V377.5M82.05 352.6V374.8M82.55 355.4V370.1M83.05 353.1V371.9M83.55 353.3V375.3M84.05 352.3V371.0M84.55 347.6V371.2M85.05 349.3V377.8M85.55 354.8V379.8M86.05 353.1V373.9M86.55 352.7V372.1M87.05 351.7V373.0M87.55 351.2V373.2M88.05 349.8V375.9M88.55 353.4V378.3M89.05 349.3V374.5M89.55 351.8V373.4M90.05 350.4V371.1M90.55 349.2V370.7M91.05 349.0V369.6M91.55 348.3V373.6M92.05 351.4V373.7M92.55 353.0V373.8M93.05 352.0V378.6M93.55 343.5V373.0M94.05 340.1V372.3M94.55 349.0V371.7M95.05 346.1V378.0M95.55 346.5V373.5M96.05 349.4V375.4M96.55 347.4V374.6M97.05 348.9V374.9M97.55 349.2V372.0M98.05 353.7V372.1M98.55 349.8V373.1M99.05 350.3V372.7M99.55 351.3V370.2M100.05 352.9V374.4M100.55 348.3V374.3M101.05 350.6V371.0M101.55 348.5V373.9M102.05 347.7V378.6M102.55 352.3V378.3M103.05 353.3V374.1M103.55 349.6V375.7M104.05 352.1V373.6M104.55 350.9V381.6M105.05 349.4V378.6M105.55 347.6V378.8M106.05 353.2V377.5M106.55 351.2V370.7M107.05 346.7V376.6M107.55 352.3V373.7M108.05 354.3V370.1M108.55 354.5V373.5M109.05 353.4V369.7M109.55 353.1V376.9M110.05 353.4V377.4M110.55 352.6V371.7M111.05 354.7V374.7M111.55 355.0V374.1M112.05 352.3V373.2M112.55 352.4V378.9M113.05 348.9V377.0M113.55 351.5V370.7M114.05 349.7V373.7M114.55 352.9V371.6M115.05 352.1V372.8M115.55 349.7V372.0M116.05 347.7V373.1M116.55 352.0V373.7M117.05 354.3V375.7M117.55 352.1V372.8M118.05 351.2V375.7M118.55 350.3V373.9M119.05 353.1V378.2M119.55 350.7V372.2M120.05 350.5V379.9M120.55 354.8V375.1M121.05 350.9V375.5M121.55 346.0V374.6M122.05 348.7V371.3M122.55 351.2V373.7M123.05 349.2V374.0M123.55 350.3V382.6M124.05 352.2V372.0M124.55 351.6V372.2M125.05 346.4V371.7M125.55 349.2V372.0M126.05 352.2V373.7M126.55 352.2V376.0M127.05 350.0V370.5M127.55 349.8V373.2M128.05 351.5V370.8M128.55 346.2V373.9M129.05 347.6V371.5M129.55 348.1V372.1M130.05 352.1V372.9M130.55 343.6V377.5M131.05 353.0V371.6M131.55 348.1V370.0M132.05 353.6V372.8M132.55 348.4V383.3M133.05 346.3V376.8M133.55 349.1V374.7M134.05 350.1V371.6M134.55 354.2V376.1M135.05 347.5V375.2M135.55 352.9V376.8M136.05 350.5V374.1M136.55 351.8V375.2M137.05 353.2V375.4M137.55 351.2V374.0M138.05 350.9V375.6M138.55 350.3V372.1M139.05 350.8V382.5M139.55 353.2V376.1M140.05 351.2V377.8M140.55 352.7V373.6M141.05 351.5V374.8M141.55 349.2V380.4M142.05 343.7V377.4M142.55 348.7V377.6M143.05 351.5V371.0M143.55 351.5V372.4M144.05 349.3V376.8M144.55 346.7V372.6M145.05 353.0V378.2M145.55 344.8V376.1M146.05 353.4V372.6M146.55 352.2V371.6M147.05 352.3V371.9M147.55 346.8V379.3M148.05 340.3V373.9M148.55 346.0V375.6M149.05 347.3V373.2M149.55 353.8V373.5M150.05 354.7V372.1M150.55 354.8V375.7M151.05 349.3V374.7M151.55 353.5V373.9M152.05 353.0V379.2M152.55 353.0V378.3M153.05 351.4V372.3M153.55 345.2V376.5" fill="none" stroke="#b0eeee" stroke-width="0.6" stroke-opacity="0.85"/><path d="M77.80 407.4 L78.05 407.4 L78.55 406.3 L79.05 406.9 L79.55 407.5 L80.05 406.2 L80.55 406.9 L81.05 406.9 L81.55 408.3 L82.05 407.2 L82.55 406.9 L83.05 406.9 L83.55 407.1 L84.05 406.0 L84.55 407.6 L85.05 408.1 L85.55 407.0 L86.05 406.1 L86.55 406.2 L87.05 406.0 L87.55 404.8 L88.05 406.6 L88.55 408.4 L89.05 408.0 L89.55 407.4 L90.05 408.8 L90.55 408.6 L91.05 408.4 L91.55 406.5 L92.05 405.8 L92.55 406.8 L93.05 407.1 L93.55 406.5 L94.05 406.2 L94.55 407.3 L95.05 406.2 L95.55 406.3 L96.05 405.9 L96.55 408.4 L97.05 408.0 L97.55 406.6 L98.05 405.4 L98.55 405.1 L99.05 403.9 L99.55 404.0 L100.05 404.8 L100.55 406.5 L101.05 406.3 L101.55 406.9 L102.05 407.1 L102.55 408.2 L103.05 409.6 L103.55 407.1 L104.05 407.1 L104.55 407.0 L105.05 406.9 L105.55 405.3 L106.05 406.9 L106.55 405.5 L107.05 405.9 L107.55 406.2 L108.05 405.6 L108.55 405.3 L109.05 406.1 L109.55 406.9 L110.05 405.6 L110.55 407.2 L111.05 406.4 L111.55 407.5 L112.05 406.5 L112.55 406.2 L113.05 405.8 L113.55 407.2 L114.05 407.5 L114.55 408.9 L115.05 407.1 L115.55 405.6 L116.05 405.4 L116.55 405.7 L117.05 405.6 L117.55 407.5 L118.05 408.2 L118.55 409.0 L119.05 406.6 L119.55 406.6 L120.05 406.7 L120.55 404.9 L121.05 404.8 L121.55 407.7 L122.05 405.3 L122.55 406.7 L123.05 408.0 L123.55 407.3 L124.05 406.9 L124.55 407.1 L125.05 407.3 L125.55 406.9 L126.05 408.4 L126.55 406.9 L127.05 408.9 L127.55 407.1 L128.05 406.8 L128.55 405.2 L129.05 405.0 L129.55 404.9 L130.05 404.1 L130.55 406.5 L131.05 406.9 L131.55 406.3 L132.05 406.8 L132.55 407.5 L133.05 406.5 L133.55 407.0 L134.05 406.3 L134.55 407.1 L135.05 407.1 L135.55 406.1 L136.05 408.2 L136.55 407.5 L137.05 407.0 L137.55 408.5 L138.05 407.6 L138.55 407.0 L139.05 407.2 L139.55 407.7 L140.05 406.3 L140.55 406.0 L141.05 406.3 L141.55 403.5 L142.05 404.7 L142.55 403.9 L143.05 406.0 L143.55 405.9 L144.05 407.8 L144.55 407.4 L145.05 407.6 L145.55 407.2 L146.05 407.3 L146.55 408.4 L147.05 407.8 L147.55 408.9 L148.05 407.0 L148.55 407.5 L149.05 405.2 L149.55 406.6 L150.05 405.6 L150.55 406.1 L151.05 406.0 L151.55 407.0 L152.05 407.0 L152.55 407.6 L153.05 408.0 L153.55 408.4 L153.80 408.4 L153.80 430.7 L153.55 430.7 L153.05 430.0 L152.55 430.1 L152.05 429.7 L151.55 429.5 L151.05 428.0 L150.55 428.3 L150.05 427.5 L149.55 428.4 L149.05 427.9 L148.55 427.7 L148.05 428.9 L147.55 428.7 L147.05 430.2 L146.55 428.8 L146.05 426.9 L145.55 426.1 L145.05 426.6 L144.55 425.6 L144.05 425.7 L143.55 427.6 L143.05 427.5 L142.55 427.9 L142.05 428.7 L141.55 429.1 L141.05 428.8 L140.55 428.6 L140.05 429.1 L139.55 428.2 L139.05 428.2 L138.55 428.3 L138.05 429.5 L137.55 428.9 L137.05 430.5 L136.55 430.3 L136.05 431.6 L135.55 430.3 L135.05 431.1 L134.55 430.2 L134.05 429.1 L133.55 428.3 L133.05 428.4 L132.55 429.2 L132.05 428.2 L131.55 427.6 L131.05 426.6 L130.55 427.2 L130.05 426.7 L129.55 427.8 L129.05 428.4 L128.55 429.7 L128.05 429.9 L127.55 428.9 L127.05 428.5 L126.55 428.1 L126.05 428.4 L125.55 428.0 L125.05 427.1 L124.55 427.0 L124.05 427.9 L123.55 428.1 L123.05 428.3 L122.55 428.2 L122.05 429.9 L121.55 429.7 L121.05 430.6 L120.55 430.1 L120.05 429.9 L119.55 429.5 L119.05 429.5 L118.55 429.6 L118.05 429.0 L117.55 428.7 L117.05 428.3 L116.55 428.8 L116.05 428.9 L115.55 429.0 L115.05 429.4 L114.55 429.8 L114.05 428.0 L113.55 428.3 L113.05 428.2 L112.55 428.1 L112.05 429.0 L111.55 430.0 L111.05 429.5 L110.55 429.7 L110.05 430.1 L109.55 429.9 L109.05 429.6 L108.55 429.7 L108.05 428.4 L107.55 428.9 L107.05 428.3 L106.55 427.7 L106.05 426.6 L105.55 428.3 L105.05 428.2 L104.55 429.1 L104.05 430.3 L103.55 428.6 L103.05 429.7 L102.55 428.6 L102.05 429.9 L101.55 428.6 L101.05 428.2 L100.55 428.5 L100.05 428.5 L99.55 428.9 L99.05 428.2 L98.55 427.9 L98.05 428.1 L97.55 428.1 L97.05 428.9 L96.55 428.1 L96.05 428.2 L95.55 428.0 L95.05 428.8 L94.55 428.8 L94.05 428.3 L93.55 430.9 L93.05 428.7 L92.55 428.7 L92.05 428.9 L91.55 427.9 L91.05 427.3 L90.55 426.9 L90.05 429.9 L89.55 429.1 L89.05 430.8 L88.55 430.7 L88.05 430.5 L87.55 430.7 L87.05 430.2 L86.55 429.1 L86.05 429.3 L85.55 430.2 L85.05 428.3 L84.55 428.4 L84.05 427.5 L83.55 428.2 L83.05 430.4 L82.55 429.2 L82.05 427.8 L81.55 430.8 L81.05 429.5 L80.55 430.4 L80.05 430.7 L79.55 431.7 L79.05 431.3 L78.55 431.9 L78.05 430.5 L77.80 430.5 Z" fill="#fa8072"/><path d="M78.05 402.5V437.8M78.55 405.1V431.9M79.05 400.5V435.4M79.55 402.3V433.5M80.05 402.6V434.4M80.55 402.4V430.5M81.05 406.1V436.2M81.55 404.1V431.1M82.05 400.3V428.5M82.55 402.3V434.8M83.05 403.3V435.8M83.55 406.3V429.0M84.05 405.0V430.4M84.55 403.5V428.7M85.05 403.1V435.3M85.55 406.0V432.5M86.05 400.7V436.5M86.55 399.4V435.4M87.05 401.8V431.3M87.55 401.6V436.3M88.05 403.9V432.8M88.55 403.5V436.2M89.05 403.9V433.9M89.55 401.3V436.1M90.05 408.6V440.8M90.55 407.7V434.3M91.05 407.5V433.3M91.55 405.9V429.8M92.05 401.7V433.8M92.55 403.7V432.1M93.05 404.5V429.0M93.55 404.3V439.4M94.05 405.8V430.0M94.55 403.5V429.5M95.05 402.3V429.9M95.55 402.1V429.5M96.05 396.5V433.1M96.55 406.2V432.7M97.05 406.8V432.0M97.55 402.9V428.3M98.05 403.0V430.8M98.55 402.3V429.3M99.05 400.8V431.7M99.55 403.2V429.7M100.05 403.3V430.7M100.55 399.0V431.4M101.05 400.3V430.6M101.55 405.3V430.1M102.05 399.9V434.7M102.55 401.2V432.1M103.05 404.0V431.6M103.55 406.0V433.3M104.05 405.5V433.1M104.55 403.0V430.3M105.05 406.7V437.0M105.55 402.9V432.0M106.05 399.3V426.9M106.55 402.6V429.6M107.05 404.1V432.8M107.55 400.7V430.8M108.05 400.7V434.1M108.55 402.6V430.5M109.05 404.6V438.1M109.55 405.1V434.4M110.05 395.7V432.1M110.55 404.3V430.5M111.05 400.8V432.3M111.55 406.6V432.3M112.05 405.6V430.1M112.55 402.9V428.3M113.05 405.4V432.1M113.55 404.8V435.4M114.05 399.0V433.2M114.55 404.3V430.1M115.05 405.2V433.4M115.55 400.1V430.3M116.05 399.4V441.2M116.55 403.0V432.8M117.05 403.9V434.2M117.55 404.9V433.8M118.05 407.2V432.5M118.55 391.6V433.8M119.05 402.6V432.6M119.55 402.4V430.4M120.05 401.8V436.4M120.55 400.4V431.3M121.05 404.4V433.0M121.55 407.3V440.1M122.05 403.4V440.2M122.55 402.6V434.7M123.05 405.5V428.5M123.55 405.0V428.4M124.05 406.2V429.0M124.55 400.1V436.4M125.05 406.7V430.5M125.55 403.8V429.9M126.05 405.3V428.5M126.55 403.8V431.3M127.05 398.6V429.1M127.55 400.9V429.0M128.05 405.3V432.8M128.55 400.0V433.3M129.05 402.3V429.2M129.55 402.6V434.5M130.05 400.1V436.5M130.55 404.8V429.9M131.05 404.4V428.9M131.55 403.8V435.5M132.05 404.1V429.4M132.55 406.1V437.4M133.05 406.0V428.8M133.55 406.9V428.4M134.05 400.8V433.1M134.55 403.0V431.0M135.05 400.4V432.0M135.55 403.0V434.7M136.05 401.5V435.0M136.55 404.0V431.8M137.05 404.3V440.0M137.55 404.0V430.5M138.05 406.4V432.5M138.55 403.1V428.5M139.05 405.4V430.2M139.55 402.8V428.7M140.05 405.3V434.7M140.55 402.9V432.6M141.05 405.9V429.8M141.55 399.9V439.7M142.05 402.2V433.0M142.55 399.5V428.2M143.05 401.6V431.3M143.55 401.3V432.0M144.05 407.7V431.3M144.55 404.8V430.3M145.05 406.6V426.6M145.55 403.7V429.5M146.05 403.6V427.6M146.55 403.8V435.0M147.05 402.0V431.3M147.55 405.8V429.7M148.05 404.5V433.7M148.55 397.4V428.2M149.05 403.8V428.6M149.55 404.8V433.8M150.05 402.2V434.7M150.55 397.4V428.4M151.05 400.6V434.0M151.55 404.5V435.5M152.05 407.0V435.0M152.55 405.5V436.2M153.05 405.1V432.0M153.55 405.3V433.2" fill="none" stroke="#fa8072" stroke-width="0.6" stroke-opacity="0.85"/></g><g clip-path="url(#cr)"><path d="M379.50 59.6 L379.75 59.6 L380.25 60.0 L380.75 60.4 L381.25 63.0 L381.75 64.4 L382.25 63.2 L382.75 63.0 L383.25 63.3 L383.75 61.4 L384.25 62.1 L384.75 61.6 L385.25 62.1 L385.75 62.1 L386.25 63.3 L386.75 63.3 L387.25 62.9 L387.75 61.6 L388.25 61.5 L388.75 60.6 L389.25 61.4 L389.75 61.8 L390.25 61.4 L390.75 61.3 L391.25 63.0 L391.75 63.1 L392.25 61.6 L392.75 62.0 L393.25 63.2 L393.75 63.4 L394.25 61.9 L394.75 61.3 L395.25 62.3 L395.75 61.8 L396.25 61.4 L396.75 62.6 L397.25 61.8 L397.75 62.1 L398.25 62.1 L398.75 60.9 L399.25 60.4 L399.75 61.1 L400.25 61.5 L400.75 61.2 L401.25 61.7 L401.75 61.5 L402.25 61.3 L402.75 61.2 L403.25 62.7 L403.75 62.3 L404.25 63.0 L404.75 63.5 L405.25 64.1 L405.75 63.8 L406.25 63.5 L406.75 61.8 L407.25 61.8 L407.75 61.1 L408.25 60.7 L408.75 61.4 L409.25 61.9 L409.75 61.3 L410.25 61.5 L410.75 61.0 L411.25 61.6 L411.75 61.5 L412.25 62.4 L412.75 60.9 L413.25 62.1 L413.75 63.1 L414.25 62.5 L414.75 61.8 L415.25 60.9 L415.75 60.7 L416.25 60.7 L416.75 61.4 L417.25 61.2 L417.75 62.2 L418.25 60.3 L418.75 61.2 L419.25 61.5 L419.75 61.9 L420.25 61.9 L420.75 63.1 L421.25 63.9 L421.75 62.9 L422.25 63.3 L422.75 63.6 L423.25 61.9 L423.75 59.9 L424.25 61.0 L424.75 61.6 L425.25 61.3 L425.75 61.7 L426.25 62.9 L426.75 62.1 L427.25 62.0 L427.75 61.6 L428.25 60.7 L428.75 60.9 L429.25 61.0 L429.75 61.3 L430.25 61.9 L430.75 62.9 L431.25 62.3 L431.75 63.7 L432.25 62.4 L432.75 63.0 L433.25 62.5 L433.75 63.4 L434.25 61.8 L434.75 62.5 L435.25 62.1 L435.75 61.5 L436.25 61.6 L436.75 61.5 L437.25 61.8 L437.75 63.9 L438.25 63.6 L438.75 62.8 L439.25 63.7 L439.75 63.1 L440.25 63.4 L440.75 63.4 L441.25 61.7 L441.75 62.8 L442.25 62.6 L442.75 61.8 L443.25 60.4 L443.75 61.8 L444.25 62.0 L444.75 61.3 L445.25 60.8 L445.75 60.9 L446.25 60.0 L446.75 60.9 L447.25 61.4 L447.75 61.9 L448.25 63.5 L448.75 63.0 L449.25 61.4 L449.75 61.1 L450.25 62.5 L450.75 62.3 L451.25 62.4 L451.75 62.6 L452.25 62.3 L452.75 63.1 L453.25 63.7 L453.75 62.6 L454.25 63.1 L454.75 63.1 L455.00 63.1 L455.00 79.1 L454.75 79.1 L454.25 79.9 L453.75 79.4 L453.25 79.5 L452.75 80.0 L452.25 79.2 L451.75 80.7 L451.25 81.0 L450.75 80.9 L450.25 78.5 L449.75 79.0 L449.25 78.8 L448.75 79.6 L448.25 80.5 L447.75 79.7 L447.25 79.2 L446.75 79.2 L446.25 78.4 L445.75 79.1 L445.25 78.0 L444.75 80.4 L444.25 79.4 L443.75 80.2 L443.25 81.4 L442.75 81.0 L442.25 81.6 L441.75 81.6 L441.25 80.0 L440.75 81.0 L440.25 79.7 L439.75 79.4 L439.25 78.5 L438.75 79.8 L438.25 78.8 L437.75 79.2 L437.25 79.3 L436.75 80.6 L436.25 82.5 L435.75 80.6 L435.25 81.4 L434.75 80.4 L434.25 81.2 L433.75 80.8 L433.25 82.2 L432.75 81.6 L432.25 80.3 L431.75 80.9 L431.25 79.6 L430.75 80.6 L430.25 79.3 L429.75 79.3 L429.25 79.9 L428.75 79.9 L428.25 79.6 L427.75 79.6 L427.25 79.4 L426.75 79.9 L426.25 79.6 L425.75 79.9 L425.25 80.5 L424.75 81.6 L424.25 80.3 L423.75 79.8 L423.25 78.8 L422.75 81.6 L422.25 80.8 L421.75 80.2 L421.25 80.6 L420.75 81.6 L420.25 79.7 L419.75 80.7 L419.25 80.4 L418.75 80.0 L418.25 80.8 L417.75 79.7 L417.25 81.3 L416.75 80.6 L416.25 80.1 L415.75 79.2 L415.25 80.0 L414.75 80.0 L414.25 79.7 L413.75 80.5 L413.25 80.4 L412.75 81.9 L412.25 81.6 L411.75 82.5 L411.25 80.2 L410.75 81.7 L410.25 81.7 L409.75 81.0 L409.25 82.6 L408.75 80.8 L408.25 81.9 L407.75 81.0 L407.25 79.9 L406.75 80.1 L406.25 81.3 L405.75 80.2 L405.25 80.6 L404.75 79.2 L404.25 79.1 L403.75 79.1 L403.25 79.0 L402.75 78.9 L402.25 78.5 L401.75 79.1 L401.25 77.9 L400.75 80.1 L400.25 79.5 L399.75 80.7 L399.25 81.3 L398.75 80.2 L398.25 78.6 L397.75 80.2 L397.25 80.0 L396.75 80.0 L396.25 78.9 L395.75 80.1 L395.25 80.9 L394.75 79.4 L394.25 81.1 L393.75 79.8 L393.25 79.6 L392.75 79.5 L392.25 79.6 L391.75 78.9 L391.25 78.8 L390.75 80.4 L390.25 80.7 L389.75 80.3 L389.25 78.8 L388.75 79.2 L388.25 79.5 L387.75 79.3 L387.25 79.1 L386.75 81.4 L386.25 80.8 L385.75 81.0 L385.25 79.9 L384.75 80.0 L384.25 80.2 L383.75 79.4 L383.25 80.4 L382.75 81.5 L382.25 82.0 L381.75 81.5 L381.25 82.1 L380.75 82.0 L380.25 80.6 L379.75 79.6 L379.50 79.6 Z" fill="#f0ffff"/><path d="M379.75 57.7V80.1M380.25 48.5V84.4M380.75 52.7V83.4M381.25 55.5V86.2M381.75 62.7V82.0M382.25 59.1V84.1M382.75 57.2V83.0M383.25 62.7V82.7M383.75 44.5V84.8M384.25 53.6V86.7M384.75 56.6V80.2M385.25 58.9V83.0M385.75 53.9V84.9M386.25 59.5V81.2M386.75 59.0V83.8M387.25 60.6V85.6M387.75 59.6V82.7M388.25 61.0V81.4M388.75 55.1V79.8M389.25 54.2V79.1M389.75 56.8V82.6M390.25 57.9V81.1M390.75 57.9V84.6M391.25 62.0V87.7M391.75 62.9V82.1M392.25 60.8V87.2M392.75 55.2V80.1M393.25 56.1V82.9M393.75 61.9V81.1M394.25 61.6V83.2M394.75 54.0V82.3M395.25 58.7V82.1M395.75 57.0V83.1M396.25 59.3V84.5M396.75 61.4V87.5M397.25 60.4V82.4M397.75 61.8V84.5M398.25 53.4V83.0M398.75 58.3V82.5M399.25 55.3V82.6M399.75 60.8V80.8M400.25 59.6V87.3M400.75 60.5V84.0M401.25 59.4V79.6M401.75 59.0V84.3M402.25 60.6V79.6M402.75 58.9V82.2M403.25 58.6V90.2M403.75 42.1V85.5M404.25 53.8V82.9M404.75 60.8V79.4M405.25 59.2V81.0M405.75 49.0V82.3M406.25 63.0V83.5M406.75 58.8V87.1M407.25 60.1V81.8M407.75 56.9V82.4M408.25 54.4V89.2M408.75 58.9V83.0M409.25 59.9V83.1M409.75 60.3V83.2M410.25 56.8V88.3M410.75 53.9V82.3M411.25 56.9V85.8M411.75 60.3V86.0M412.25 60.4V86.5M412.75 52.7V87.1M413.25 59.8V92.1M413.75 62.6V82.9M414.25 56.7V83.9M414.75 60.5V86.3M415.25 55.1V86.7M415.75 40.3V81.2M416.25 59.3V82.1M416.75 49.6V80.8M417.25 59.7V84.3M417.75 57.8V81.4M418.25 53.7V82.7M418.75 58.0V83.2M419.25 61.4V82.2M419.75 59.3V85.6M420.25 60.8V84.5M420.75 61.1V83.4M421.25 61.2V80.8M421.75 58.9V80.4M422.25 58.4V88.8M422.75 50.7V85.9M423.25 60.0V79.5M423.75 59.9V80.8M424.25 52.2V84.9M424.75 57.2V82.1M425.25 60.8V87.3M425.75 60.3V83.6M426.25 55.5V81.6M426.75 50.1V81.3M427.25 54.2V82.4M427.75 59.5V80.7M428.25 53.5V82.1M428.75 60.6V87.7M429.25 60.8V90.9M429.75 51.0V85.7M430.25 61.1V83.8M430.75 60.6V84.3M431.25 57.4V83.2M431.75 61.7V84.6M432.25 55.9V81.4M432.75 54.3V84.4M433.25 57.7V87.3M433.75 59.1V82.5M434.25 60.2V81.4M434.75 51.5V83.1M435.25 56.9V82.3M435.75 57.6V81.6M436.25 58.3V82.6M436.75 59.7V86.2M437.25 57.3V80.0M437.75 63.3V91.8M438.25 61.1V81.5M438.75 58.7V83.1M439.25 59.2V78.6M439.75 62.0V81.5M440.25 60.2V80.1M440.75 59.0V81.5M441.25 60.1V89.7M441.75 61.0V88.2M442.25 57.5V81.7M442.75 55.7V84.7M443.25 59.9V87.0M443.75 60.2V82.3M444.25 60.1V86.0M444.75 58.6V82.4M445.25 59.2V83.7M445.75 51.5V80.2M446.25 59.9V78.5M446.75 59.8V91.0M447.25 61.2V87.2M447.75 59.9V83.7M448.25 62.8V85.5M448.75 60.8V87.3M449.25 58.6V81.4M449.75 58.9V80.1M450.25 55.9V81.9M450.75 58.9V88.2M451.25 61.0V83.8M451.75 60.3V83.3M452.25 62.3V82.1M452.75 59.6V81.8M453.25 55.3V82.4M453.75 56.1V83.0M454.25 59.0V81.4M454.75 62.5V84.4" fill="none" stroke="#f0ffff" stroke-width="0.6" stroke-opacity="0.85"/><path d="M379.50 128.2 L379.75 128.2 L380.25 130.0 L380.75 128.8 L381.25 127.9 L381.75 126.7 L382.25 127.3 L382.75 126.8 L383.25 127.4 L383.75 127.9 L384.25 128.9 L384.75 127.6 L385.25 127.0 L385.75 127.9 L386.25 128.1 L386.75 127.1 L387.25 129.2 L387.75 128.1 L388.25 128.4 L388.75 129.7 L389.25 128.2 L389.75 128.3 L390.25 129.5 L390.75 129.4 L391.25 128.3 L391.75 129.0 L392.25 128.6 L392.75 127.9 L393.25 127.7 L393.75 128.2 L394.25 127.1 L394.75 126.6 L395.25 128.5 L395.75 129.2 L396.25 127.4 L396.75 129.5 L397.25 129.7 L397.75 129.3 L398.25 129.2 L398.75 129.5 L399.25 127.7 L399.75 128.8 L400.25 127.6 L400.75 128.8 L401.25 127.7 L401.75 128.4 L402.25 127.4 L402.75 127.4 L403.25 128.5 L403.75 127.1 L404.25 128.0 L404.75 128.6 L405.25 129.0 L405.75 129.3 L406.25 130.5 L406.75 129.9 L407.25 129.7 L407.75 128.8 L408.25 127.6 L408.75 128.2 L409.25 127.3 L409.75 127.6 L410.25 128.9 L410.75 128.6 L411.25 127.4 L411.75 128.3 L412.25 126.6 L412.75 127.2 L413.25 127.0 L413.75 127.9 L414.25 127.4 L414.75 127.9 L415.25 127.3 L415.75 127.3 L416.25 128.3 L416.75 127.6 L417.25 127.0 L417.75 126.6 L418.25 126.4 L418.75 126.9 L419.25 126.9 L419.75 128.3 L420.25 129.9 L420.75 128.6 L421.25 128.5 L421.75 129.0 L422.25 128.7 L422.75 128.1 L423.25 128.5 L423.75 128.4 L424.25 127.8 L424.75 127.7 L425.25 129.0 L425.75 127.5 L426.25 127.4 L426.75 127.6 L427.25 128.4 L427.75 128.5 L428.25 127.6 L428.75 128.7 L429.25 128.4 L429.75 128.6 L430.25 126.7 L430.75 127.9 L431.25 127.7 L431.75 129.0 L432.25 128.7 L432.75 129.6 L433.25 129.6 L433.75 127.1 L434.25 126.9 L434.75 126.4 L435.25 126.9 L435.75 125.8 L436.25 126.7 L436.75 126.7 L437.25 128.2 L437.75 128.2 L438.25 129.4 L438.75 128.9 L439.25 129.5 L439.75 129.8 L440.25 128.8 L440.75 127.5 L441.25 127.6 L441.75 126.9 L442.25 125.9 L442.75 128.1 L443.25 129.3 L443.75 127.3 L444.25 128.1 L444.75 128.2 L445.25 127.3 L445.75 128.3 L446.25 128.6 L446.75 129.7 L447.25 129.8 L447.75 129.3 L448.25 127.8 L448.75 128.5 L449.25 128.8 L449.75 128.1 L450.25 128.8 L450.75 128.5 L451.25 127.3 L451.75 127.1 L452.25 128.0 L452.75 128.5 L453.25 129.4 L453.75 129.3 L454.25 127.8 L454.75 129.4 L455.00 129.4 L455.00 150.6 L454.75 150.6 L454.25 150.5 L453.75 149.9 L453.25 151.5 L452.75 151.7 L452.25 152.1 L451.75 151.3 L451.25 150.4 L450.75 151.0 L450.25 150.1 L449.75 149.8 L449.25 150.2 L448.75 150.1 L448.25 150.5 L447.75 148.7 L447.25 149.2 L446.75 148.6 L446.25 148.3 L445.75 149.5 L445.25 150.9 L444.75 150.0 L444.25 150.8 L443.75 149.7 L443.25 151.1 L442.75 150.7 L442.25 150.9 L441.75 150.9 L441.25 151.7 L440.75 150.8 L440.25 150.8 L439.75 151.6 L439.25 151.7 L438.75 149.5 L438.25 148.9 L437.75 147.8 L437.25 147.2 L436.75 148.5 L436.25 149.0 L435.75 150.3 L435.25 149.7 L434.75 150.7 L434.25 151.6 L433.75 150.6 L433.25 148.6 L432.75 149.8 L432.25 150.8 L431.75 149.8 L431.25 150.3 L430.75 150.0 L430.25 149.9 L429.75 149.6 L429.25 150.0 L428.75 150.4 L428.25 151.9 L427.75 151.8 L427.25 151.4 L426.75 149.4 L426.25 150.3 L425.75 150.2 L425.25 149.7 L424.75 149.2 L424.25 150.4 L423.75 149.6 L423.25 148.7 L422.75 149.7 L422.25 150.7 L421.75 149.5 L421.25 150.6 L420.75 149.7 L420.25 149.7 L419.75 150.4 L419.25 150.4 L418.75 149.9 L418.25 150.5 L417.75 150.5 L417.25 150.4 L416.75 150.4 L416.25 150.4 L415.75 149.5 L415.25 148.1 L414.75 149.6 L414.25 147.4 L413.75 147.7 L413.25 147.6 L412.75 148.2 L412.25 148.3 L411.75 149.5 L411.25 148.2 L410.75 149.0 L410.25 148.9 L409.75 148.8 L409.25 149.2 L408.75 150.5 L408.25 149.5 L407.75 150.1 L407.25 150.5 L406.75 150.2 L406.25 151.0 L405.75 149.7 L405.25 149.5 L404.75 150.6 L404.25 149.4 L403.75 149.8 L403.25 150.0 L402.75 148.6 L402.25 149.7 L401.75 150.2 L401.25 151.7 L400.75 152.2 L400.25 152.9 L399.75 152.7 L399.25 151.5 L398.75 151.4 L398.25 150.1 L397.75 150.1 L397.25 149.2 L396.75 150.7 L396.25 150.3 L395.75 150.8 L395.25 151.4 L394.75 151.8 L394.25 152.0 L393.75 150.7 L393.25 151.0 L392.75 150.3 L392.25 152.2 L391.75 150.6 L391.25 151.9 L390.75 150.3 L390.25 149.6 L389.75 150.5 L389.25 150.0 L388.75 148.7 L388.25 150.0 L387.75 150.4 L387.25 151.1 L386.75 150.0 L386.25 150.7 L385.75 150.1 L385.25 150.9 L384.75 150.7 L384.25 149.9 L383.75 151.2 L383.25 150.4 L382.75 148.8 L382.25 149.8 L381.75 150.3 L381.25 150.5 L380.75 151.0 L380.25 151.7 L379.75 150.4 L379.50 150.4 Z" fill="#e0103c"/><path d="M379.75 122.9V163.3M380.25 124.3V153.4M380.75 127.6V155.1M381.25 121.8V154.7M381.75 124.9V150.4M382.25 123.2V152.7M382.75 126.1V153.3M383.25 126.5V151.8M383.75 127.3V152.9M384.25 127.1V155.6M384.75 126.8V152.8M385.25 125.7V155.7M385.75 114.1V153.6M386.25 126.5V158.3M386.75 124.4V154.6M387.25 128.1V152.4M387.75 126.9V151.5M388.25 128.2V153.1M388.75 126.3V149.4M389.25 117.5V150.1M389.75 120.4V155.6M390.25 126.0V152.5M390.75 129.2V150.9M391.25 120.2V156.1M391.75 128.0V151.8M392.25 120.7V153.7M392.75 124.4V157.2M393.25 123.8V158.5M393.75 124.6V152.2M394.25 123.8V156.2M394.75 125.7V157.0M395.25 125.9V155.7M395.75 123.2V152.6M396.25 123.3V152.1M396.75 128.6V152.8M397.25 127.9V152.9M397.75 125.9V150.8M398.25 124.0V151.5M398.75 127.7V153.0M399.25 125.1V153.2M399.75 125.9V154.2M400.25 125.0V156.7M400.75 127.6V153.6M401.25 124.4V152.0M401.75 117.8V153.2M402.25 119.4V158.2M402.75 125.2V149.7M403.25 120.6V154.0M403.75 125.6V155.8M404.25 120.2V150.5M404.75 127.3V156.7M405.25 125.3V152.7M405.75 128.0V149.7M406.25 126.6V160.2M406.75 129.6V151.3M407.25 127.1V150.9M407.75 128.2V150.2M408.25 125.1V153.7M408.75 126.9V157.1M409.25 123.9V150.3M409.75 127.1V154.6M410.25 124.7V155.7M410.75 122.5V153.7M411.25 122.6V148.6M411.75 127.9V151.7M412.25 116.7V151.7M412.75 126.4V150.2M413.25 125.8V149.2M413.75 125.0V154.2M414.25 124.7V151.9M414.75 124.4V152.4M415.25 122.3V152.4M415.75 122.0V150.2M416.25 127.1V150.5M416.75 123.7V153.0M417.25 125.9V151.9M417.75 121.6V153.7M418.25 122.2V152.2M418.75 126.6V157.2M419.25 120.7V151.6M419.75 121.0V160.5M420.25 129.6V150.8M420.75 125.7V152.5M421.25 117.4V151.1M421.75 124.2V151.6M422.25 125.8V153.2M422.75 125.2V153.9M423.25 127.5V154.3M423.75 124.8V153.6M424.25 127.8V152.0M424.75 126.8V152.2M425.25 127.8V155.1M425.75 122.5V150.7M426.25 120.3V153.8M426.75 126.4V150.6M427.25 119.3V153.4M427.75 127.9V158.1M428.25 127.0V160.1M428.75 117.8V153.2M429.25 126.7V150.3M429.75 126.0V157.9M430.25 121.5V151.5M430.75 121.6V155.0M431.25 126.8V153.9M431.75 123.3V153.0M432.25 126.6V151.7M432.75 127.4V150.5M433.25 127.4V153.5M433.75 126.5V161.3M434.25 122.1V156.0M434.75 125.2V152.3M435.25 122.4V151.6M435.75 120.2V151.6M436.25 120.3V154.4M436.75 118.9V157.5M437.25 127.4V147.2M437.75 125.5V150.5M438.25 128.5V149.8M438.75 127.5V151.1M439.25 129.5V153.1M439.75 128.3V154.3M440.25 124.7V156.4M440.75 123.3V153.5M441.25 127.5V152.1M441.75 121.2V151.2M442.25 122.1V154.4M442.75 126.6V154.4M443.25 124.7V156.0M443.75 121.0V155.9M444.25 124.7V152.8M444.75 128.0V155.0M445.25 125.1V155.3M445.75 125.4V153.0M446.25 127.7V151.5M446.75 128.4V149.0M447.25 128.3V150.1M447.75 126.7V151.6M448.25 123.3V159.1M448.75 125.8V153.3M449.25 126.6V153.9M449.75 127.9V152.6M450.25 121.4V155.8M450.75 127.2V163.1M451.25 119.1V150.9M451.75 121.5V154.1M452.25 123.7V153.4M452.75 128.3V160.6M453.25 129.1V159.0M453.75 127.1V153.1M454.25 124.0V156.6M454.75 124.3V153.4" fill="none" stroke="#e0103c" stroke-width="0.6" stroke-opacity="0.85"/><path d="M379.50 273.1 L379.75 273.1 L380.25 273.3 L380.75 272.3 L381.25 273.2 L381.75 271.9 L382.25 271.2 L382.75 270.6 L383.25 269.7 L383.75 269.6 L384.25 269.9 L384.75 271.7 L385.25 271.7 L385.75 272.1 L386.25 271.9 L386.75 272.1 L387.25 271.7 L387.75 271.5 L388.25 271.0 L388.75 269.9 L389.25 270.3 L389.75 270.3 L390.25 270.1 L390.75 270.3 L391.25 270.9 L391.75 271.3 L392.25 272.6 L392.75 272.6 L393.25 274.0 L393.75 274.3 L394.25 273.4 L394.75 272.5 L395.25 270.8 L395.75 270.3 L396.25 270.8 L396.75 270.3 L397.25 270.6 L397.75 270.4 L398.25 270.5 L398.75 271.3 L399.25 271.8 L399.75 271.1 L400.25 269.7 L400.75 270.8 L401.25 270.0 L401.75 270.2 L402.25 271.5 L402.75 271.5 L403.25 270.8 L403.75 271.1 L404.25 270.5 L404.75 271.9 L405.25 272.8 L405.75 272.3 L406.25 273.5 L406.75 273.2 L407.25 272.4 L407.75 270.5 L408.25 271.1 L408.75 271.7 L409.25 271.0 L409.75 271.5 L410.25 271.9 L410.75 272.8 L411.25 270.9 L411.75 271.1 L412.25 271.0 L412.75 269.4 L413.25 269.2 L413.75 271.0 L414.25 271.1 L414.75 270.6 L415.25 272.5 L415.75 272.9 L416.25 272.1 L416.75 271.9 L417.25 271.3 L417.75 271.0 L418.25 269.7 L418.75 269.2 L419.25 269.5 L419.75 270.6 L420.25 269.5 L420.75 270.4 L421.25 271.1 L421.75 268.9 L422.25 269.9 L422.75 271.0 L423.25 272.8 L423.75 270.9 L424.25 272.2 L424.75 272.2 L425.25 271.3 L425.75 270.3 L426.25 272.1 L426.75 271.7 L427.25 272.3 L427.75 271.0 L428.25 271.2 L428.75 270.8 L429.25 272.0 L429.75 271.4 L430.25 272.0 L430.75 272.0 L431.25 270.4 L431.75 269.6 L432.25 271.2 L432.75 272.1 L433.25 272.8 L433.75 273.0 L434.25 273.7 L434.75 272.5 L435.25 271.7 L435.75 271.9 L436.25 269.9 L436.75 270.2 L437.25 270.5 L437.75 270.5 L438.25 270.4 L438.75 269.2 L439.25 271.5 L439.75 270.8 L440.25 272.2 L440.75 271.7 L441.25 271.6 L441.75 271.5 L442.25 270.7 L442.75 269.1 L443.25 269.7 L443.75 270.6 L444.25 269.6 L444.75 271.8 L445.25 273.1 L445.75 272.2 L446.25 272.2 L446.75 271.5 L447.25 270.5 L447.75 271.1 L448.25 271.6 L448.75 271.0 L449.25 270.6 L449.75 271.8 L450.25 270.5 L450.75 269.6 L451.25 270.6 L451.75 271.5 L452.25 271.3 L452.75 271.1 L453.25 271.4 L453.75 271.1 L454.25 271.2 L454.75 269.3 L455.00 269.3 L455.00 289.8 L454.75 289.8 L454.25 288.1 L453.75 286.9 L453.25 287.2 L452.75 287.9 L452.25 287.3 L451.75 288.1 L451.25 288.6 L450.75 289.4 L450.25 288.7 L449.75 287.2 L449.25 287.2 L448.75 289.1 L448.25 289.6 L447.75 289.0 L447.25 288.4 L446.75 289.1 L446.25 287.1 L445.75 288.9 L445.25 288.7 L444.75 287.9 L444.25 287.1 L443.75 287.4 L443.25 286.3 L442.75 288.2 L442.25 287.7 L441.75 287.3 L441.25 288.8 L440.75 288.1 L440.25 287.0 L439.75 287.7 L439.25 287.6 L438.75 287.7 L438.25 287.1 L437.75 286.7 L437.25 286.5 L436.75 287.6 L436.25 288.6 L435.75 288.6 L435.25 290.4 L434.75 289.4 L434.25 288.7 L433.75 288.6 L433.25 288.7 L432.75 287.5 L432.25 287.7 L431.75 287.4 L431.25 288.5 L430.75 288.1 L430.25 289.4 L429.75 289.1 L429.25 290.9 L428.75 289.8 L428.25 291.5 L427.75 291.0 L427.25 289.7 L426.75 288.3 L426.25 286.9 L425.75 286.2 L425.25 286.6 L424.75 285.6 L424.25 288.3 L423.75 288.9 L423.25 288.8 L422.75 286.8 L422.25 287.1 L421.75 288.2 L421.25 288.2 L420.75 287.8 L420.25 288.9 L419.75 287.9 L419.25 289.3 L418.75 288.8 L418.25 286.8 L417.75 286.9 L417.25 287.7 L416.75 288.2 L416.25 289.3 L415.75 289.1 L415.25 289.8 L414.75 288.1 L414.25 288.7 L413.75 289.5 L413.25 290.0 L412.75 289.4 L412.25 290.3 L411.75 289.3 L411.25 288.8 L410.75 289.1 L410.25 288.3 L409.75 288.4 L409.25 288.3 L408.75 288.7 L408.25 288.4 L407.75 287.5 L407.25 287.1 L406.75 288.6 L406.25 289.4 L405.75 289.7 L405.25 290.3 L404.75 289.9 L404.25 289.1 L403.75 289.5 L403.25 288.1 L402.75 288.8 L402.25 290.1 L401.75 289.4 L401.25 288.9 L400.75 288.9 L400.25 289.3 L399.75 288.9 L399.25 288.6 L398.75 288.2 L398.25 287.6 L397.75 287.3 L397.25 288.9 L396.75 289.3 L396.25 288.3 L395.75 289.0 L395.25 290.0 L394.75 287.9 L394.25 288.0 L393.75 287.8 L393.25 288.7 L392.75 287.4 L392.25 287.5 L391.75 288.1 L391.25 289.2 L390.75 286.5 L390.25 286.4 L389.75 287.4 L389.25 287.9 L388.75 289.8 L388.25 289.2 L387.75 289.6 L387.25 288.9 L386.75 288.1 L386.25 287.0 L385.75 287.8 L385.25 286.3 L384.75 287.9 L384.25 287.8 L383.75 287.5 L383.25 287.4 L382.75 288.2 L382.25 288.3 L381.75 287.1 L381.25 289.6 L380.75 288.7 L380.25 289.5 L379.75 289.5 L379.50 289.5 Z" fill="#7c7c7c"/><path d="M379.75 272.4V289.5M380.25 270.4V293.7M380.75 268.4V297.4M381.25 270.3V300.4M381.75 266.9V289.0M382.25 270.8V292.5M382.75 262.4V289.0M383.25 263.0V297.3M383.75 265.4V291.1M384.25 266.8V288.4M384.75 271.0V293.4M385.25 266.3V289.5M385.75 270.2V292.5M386.25 267.0V288.4M386.75 268.9V289.2M387.25 264.4V296.4M387.75 268.2V290.8M388.25 268.2V291.6M388.75 258.3V292.2M389.25 263.6V293.9M389.75 270.2V290.5M390.25 269.9V286.7M390.75 266.6V293.4M391.25 266.7V291.2M391.75 268.6V291.5M392.25 270.4V295.2M392.75 267.3V287.9M393.25 273.3V289.0M393.75 272.4V287.9M394.25 271.7V292.7M394.75 268.7V294.3M395.25 263.8V292.7M395.75 265.0V291.2M396.25 263.9V288.4M396.75 264.9V296.2M397.25 267.3V292.7M397.75 268.1V288.7M398.25 270.3V291.2M398.75 262.3V309.7M399.25 266.8V295.1M399.75 269.9V296.9M400.25 256.2V293.6M400.75 268.5V291.7M401.25 269.4V292.1M401.75 270.0V289.7M402.25 270.0V293.0M402.75 270.8V289.5M403.25 253.8V291.0M403.75 263.4V299.0M404.25 263.3V292.8M404.75 269.9V290.4M405.25 271.8V294.4M405.75 266.9V291.3M406.25 264.5V293.4M406.75 269.8V290.7M407.25 267.9V289.7M407.75 269.2V291.7M408.25 268.7V290.1M408.75 270.5V294.2M409.25 267.1V293.4M409.75 264.7V293.9M410.25 261.6V290.9M410.75 269.8V293.8M411.25 269.7V295.8M411.75 264.8V291.9M412.25 270.7V292.4M412.75 259.0V295.8M413.25 261.6V292.4M413.75 260.6V291.1M414.25 267.8V293.0M414.75 267.0V289.5M415.25 270.8V291.8M415.75 269.7V290.2M416.25 269.7V293.5M416.75 261.8V293.0M417.25 269.4V289.2M417.75 266.3V288.9M418.25 269.0V289.0M418.75 267.5V293.0M419.25 259.4V299.8M419.75 269.2V293.5M420.25 259.9V292.6M420.75 269.9V288.6M421.25 266.2V290.4M421.75 268.5V292.7M422.25 264.3V289.5M422.75 268.4V294.2M423.25 271.8V290.5M423.75 270.0V293.8M424.25 271.3V293.8M424.75 269.2V286.5M425.25 265.2V291.8M425.75 260.6V287.1M426.25 267.5V291.1M426.75 258.8V296.6M427.25 267.7V298.7M427.75 269.3V293.0M428.25 270.7V294.4M428.75 268.9V295.6M429.25 268.9V296.0M429.75 266.3V290.4M430.25 268.5V291.3M430.75 271.8V290.9M431.25 270.3V293.6M431.75 265.4V292.2M432.25 266.8V287.8M432.75 267.4V292.7M433.25 270.5V290.1M433.75 271.3V293.0M434.25 270.8V295.3M434.75 270.8V294.7M435.25 270.5V293.6M435.75 263.1V290.2M436.25 268.4V292.8M436.75 267.0V290.7M437.25 268.9V291.6M437.75 266.0V293.7M438.25 264.8V293.0M438.75 269.0V291.1M439.25 266.5V291.7M439.75 269.9V292.2M440.25 269.6V288.0M440.75 261.7V292.9M441.25 271.6V292.1M441.75 268.4V291.3M442.25 267.0V289.1M442.75 267.3V292.1M443.25 264.6V288.1M443.75 268.0V288.5M444.25 266.7V293.0M444.75 268.5V296.6M445.25 269.9V294.5M445.75 270.0V306.4M446.25 271.2V296.4M446.75 262.9V291.3M447.25 262.3V291.4M447.75 270.5V293.2M448.25 270.3V290.8M448.75 267.7V292.8M449.25 270.4V291.2M449.75 268.1V288.9M450.25 264.5V290.3M450.75 269.2V294.6M451.25 264.7V291.7M451.75 268.7V291.2M452.25 267.8V289.4M452.75 265.1V290.7M453.25 268.4V292.5M453.75 265.4V299.0M454.25 263.1V295.2M454.75 260.6V292.3" fill="none" stroke="#7c7c7c" stroke-width="0.6" stroke-opacity="0.85"/><path d="M379.50 333.0 L379.75 333.0 L380.25 332.1 L380.75 333.6 L381.25 332.7 L381.75 332.4 L382.25 333.0 L382.75 333.4 L383.25 332.5 L383.75 332.6 L384.25 333.2 L384.75 333.1 L385.25 332.7 L385.75 333.7 L386.25 334.0 L386.75 332.6 L387.25 333.5 L387.75 333.6 L388.25 332.0 L388.75 332.8 L389.25 333.2 L389.75 333.6 L390.25 334.1 L390.75 334.4 L391.25 334.2 L391.75 333.2 L392.25 333.5 L392.75 332.7 L393.25 333.1 L393.75 333.3 L394.25 332.6 L394.75 332.1 L395.25 331.3 L395.75 331.9 L396.25 333.8 L396.75 331.7 L397.25 332.7 L397.75 331.9 L398.25 334.0 L398.75 332.8 L399.25 333.6 L399.75 334.4 L400.25 334.0 L400.75 334.4 L401.25 333.0 L401.75 333.3 L402.25 334.1 L402.75 333.0 L403.25 334.2 L403.75 334.5 L404.25 334.5 L404.75 334.9 L405.25 333.9 L405.75 332.8 L406.25 332.5 L406.75 333.1 L407.25 332.5 L407.75 333.8 L408.25 333.7 L408.75 334.0 L409.25 333.9 L409.75 334.3 L410.25 333.8 L410.75 335.0 L411.25 334.4 L411.75 334.4 L412.25 333.6 L412.75 332.2 L413.25 333.9 L413.75 333.5 L414.25 333.8 L414.75 333.1 L415.25 334.8 L415.75 336.1 L416.25 335.3 L416.75 334.9 L417.25 334.3 L417.75 334.2 L418.25 332.4 L418.75 333.4 L419.25 333.0 L419.75 332.2 L420.25 333.3 L420.75 332.2 L421.25 332.3 L421.75 332.9 L422.25 331.6 L422.75 331.2 L423.25 331.6 L423.75 331.5 L424.25 332.6 L424.75 331.5 L425.25 332.6 L425.75 334.3 L426.25 334.0 L426.75 333.5 L427.25 333.8 L427.75 333.1 L428.25 333.4 L428.75 333.9 L429.25 334.3 L429.75 334.1 L430.25 335.4 L430.75 334.5 L431.25 332.1 L431.75 332.6 L432.25 333.5 L432.75 334.8 L433.25 334.8 L433.75 334.9 L434.25 334.6 L434.75 332.9 L435.25 331.9 L435.75 330.9 L436.25 332.8 L436.75 332.4 L437.25 332.5 L437.75 333.5 L438.25 333.2 L438.75 332.3 L439.25 332.6 L439.75 333.0 L440.25 334.6 L440.75 333.4 L441.25 333.1 L441.75 333.9 L442.25 332.6 L442.75 332.4 L443.25 332.5 L443.75 331.8 L444.25 331.5 L444.75 332.0 L445.25 332.3 L445.75 331.4 L446.25 333.6 L446.75 332.1 L447.25 334.5 L447.75 332.5 L448.25 334.1 L448.75 332.9 L449.25 333.8 L449.75 332.0 L450.25 332.6 L450.75 333.2 L451.25 333.0 L451.75 333.2 L452.25 333.8 L452.75 334.0 L453.25 333.3 L453.75 333.4 L454.25 332.4 L454.75 334.6 L455.00 334.6 L455.00 359.4 L454.75 359.4 L454.25 359.0 L453.75 358.7 L453.25 357.6 L452.75 358.6 L452.25 358.8 L451.75 360.1 L451.25 360.9 L450.75 360.7 L450.25 359.1 L449.75 359.2 L449.25 357.5 L448.75 357.1 L448.25 357.2 L447.75 358.1 L447.25 359.4 L446.75 359.1 L446.25 359.3 L445.75 358.6 L445.25 358.3 L444.75 357.5 L444.25 358.2 L443.75 358.1 L443.25 359.3 L442.75 360.3 L442.25 359.2 L441.75 360.7 L441.25 359.4 L440.75 358.9 L440.25 359.1 L439.75 359.4 L439.25 358.1 L438.75 359.7 L438.25 358.5 L437.75 360.2 L437.25 359.5 L436.75 359.1 L436.25 359.2 L435.75 360.3 L435.25 359.3 L434.75 360.5 L434.25 360.1 L433.75 358.3 L433.25 359.0 L432.75 358.4 L432.25 358.8 L431.75 359.9 L431.25 359.0 L430.75 359.0 L430.25 359.0 L429.75 358.6 L429.25 358.3 L428.75 358.3 L428.25 357.6 L427.75 356.8 L427.25 356.5 L426.75 357.5 L426.25 358.1 L425.75 358.9 L425.25 359.5 L424.75 360.1 L424.25 359.8 L423.75 359.2 L423.25 359.6 L422.75 358.4 L422.25 357.8 L421.75 358.5 L421.25 359.1 L420.75 359.4 L420.25 359.7 L419.75 357.8 L419.25 359.1 L418.75 357.2 L418.25 357.2 L417.75 356.8 L417.25 358.6 L416.75 358.9 L416.25 357.7 L415.75 358.7 L415.25 359.4 L414.75 358.6 L414.25 358.9 L413.75 358.3 L413.25 359.0 L412.75 359.2 L412.25 358.8 L411.75 358.6 L411.25 357.8 L410.75 356.9 L410.25 357.6 L409.75 357.8 L409.25 359.2 L408.75 359.1 L408.25 359.7 L407.75 359.5 L407.25 358.8 L406.75 358.6 L406.25 359.5 L405.75 357.8 L405.25 358.7 L404.75 358.6 L404.25 359.3 L403.75 357.9 L403.25 357.2 L402.75 356.5 L402.25 356.4 L401.75 355.8 L401.25 356.8 L400.75 357.1 L400.25 358.0 L399.75 357.8 L399.25 358.6 L398.75 358.2 L398.25 356.9 L397.75 357.5 L397.25 358.7 L396.75 359.4 L396.25 359.4 L395.75 360.6 L395.25 360.3 L394.75 359.6 L394.25 357.8 L393.75 357.5 L393.25 358.2 L392.75 359.2 L392.25 359.5 L391.75 360.6 L391.25 359.3 L390.75 358.8 L390.25 357.4 L389.75 356.9 L389.25 357.6 L388.75 357.5 L388.25 356.0 L387.75 359.1 L387.25 358.7 L386.75 358.6 L386.25 356.3 L385.75 357.4 L385.25 357.3 L384.75 358.8 L384.25 358.4 L383.75 358.5 L383.25 359.0 L382.75 358.7 L382.25 357.7 L381.75 357.8 L381.25 357.5 L380.75 358.2 L380.25 358.1 L379.75 358.2 L379.50 358.2 Z" fill="#f0fff0"/><path d="M379.75 329.3V364.4M380.25 331.8V360.6M380.75 331.2V366.0M381.25 330.3V360.1M381.75 325.1V361.6M382.25 330.2V358.7M382.75 330.2V362.0M383.25 331.1V364.3M383.75 329.2V363.1M384.25 325.1V361.7M384.75 327.6V360.4M385.25 326.2V363.1M385.75 331.4V358.4M386.25 323.7V358.5M386.75 331.7V361.7M387.25 331.3V359.7M387.75 331.3V360.0M388.25 331.6V357.3M388.75 330.2V359.8M389.25 333.1V361.3M389.75 329.3V360.8M390.25 326.4V359.6M390.75 332.6V362.0M391.25 325.0V366.1M391.75 330.4V362.6M392.25 332.8V365.0M392.75 331.3V367.9M393.25 333.0V358.4M393.75 331.4V367.5M394.25 331.1V361.0M394.75 328.7V361.3M395.25 321.0V360.6M395.75 327.9V364.3M396.25 323.3V364.1M396.75 330.2V362.1M397.25 328.4V358.8M397.75 329.9V360.7M398.25 330.7V362.2M398.75 332.0V362.1M399.25 332.9V362.2M399.75 330.2V359.2M400.25 332.4V360.2M400.75 329.6V359.9M401.25 326.0V360.0M401.75 333.2V363.7M402.25 333.9V366.3M402.75 330.7V367.9M403.25 333.5V363.1M403.75 330.8V362.2M404.25 329.8V362.7M404.75 329.5V363.1M405.25 324.3V361.2M405.75 326.5V358.1M406.25 324.7V360.8M406.75 329.0V360.6M407.25 328.9V364.5M407.75 331.8V363.4M408.25 323.9V360.1M408.75 329.5V364.9M409.25 333.3V363.5M409.75 329.1V362.1M410.25 324.2V359.1M410.75 328.7V359.7M411.25 332.3V363.0M411.75 332.6V361.7M412.25 332.6V368.0M412.75 330.5V362.8M413.25 327.6V359.4M413.75 332.6V362.3M414.25 326.5V364.7M414.75 331.3V362.8M415.25 330.9V364.3M415.75 329.3V361.7M416.25 334.6V366.9M416.75 332.6V363.0M417.25 334.0V366.0M417.75 326.6V367.2M418.25 332.2V359.1M418.75 331.0V359.6M419.25 329.9V366.2M419.75 330.5V362.3M420.25 330.9V367.3M420.75 330.4V365.4M421.25 325.1V361.2M421.75 330.1V360.5M422.25 331.6V364.2M422.75 326.2V361.8M423.25 328.0V362.8M423.75 329.6V364.7M424.25 331.3V363.3M424.75 328.2V363.0M425.25 332.2V362.0M425.75 331.6V364.1M426.25 332.7V359.3M426.75 324.0V358.9M427.25 329.2V361.6M427.75 329.6V357.5M428.25 327.0V357.6M428.75 327.9V361.1M429.25 332.1V366.6M429.75 333.5V363.9M430.25 329.4V364.0M430.75 332.7V359.6M431.25 331.4V362.0M431.75 332.1V363.5M432.25 326.2V361.7M432.75 332.7V361.7M433.25 333.1V364.1M433.75 325.1V366.1M434.25 333.1V360.7M434.75 331.6V365.7M435.25 330.7V363.9M435.75 329.3V360.6M436.25 329.7V361.4M436.75 326.9V362.1M437.25 323.6V363.3M437.75 331.8V364.5M438.25 328.5V359.3M438.75 330.9V360.0M439.25 331.6V363.1M439.75 331.5V360.3M440.25 331.6V369.8M440.75 326.2V359.2M441.25 324.9V362.2M441.75 333.6V363.2M442.25 317.3V362.6M442.75 324.7V366.3M443.25 328.8V361.1M443.75 331.2V359.7M444.25 324.7V362.2M444.75 330.3V361.6M445.25 326.4V361.2M445.75 328.7V360.4M446.25 332.1V361.1M446.75 328.1V360.0M447.25 332.7V371.2M447.75 330.5V362.7M448.25 332.2V358.6M448.75 325.2V359.0M449.25 333.0V357.5M449.75 326.6V365.5M450.25 308.8V365.7M450.75 331.4V366.6M451.25 328.8V364.0M451.75 331.4V360.2M452.25 332.6V361.3M452.75 333.6V360.8M453.25 327.9V359.4M453.75 332.7V361.0M454.25 331.6V362.8M454.75 329.3V364.4" fill="none" stroke="#f0fff0" stroke-width="0.6" stroke-opacity="0.85"/></g><rect x="77.8" y="240.9" width="76.00000000000001" height="1.4" fill="#eeead2" opacity="1"/><rect x="88.35000000000001" y="238" width="0.7" height="7" fill="#eeead2" opacity="1"/><rect x="95.25" y="239" width="0.7" height="6" fill="#eeead2" opacity="1"/><rect x="109.05000000000001" y="237" width="0.7" height="11" fill="#eeead2" opacity="1"/><rect x="111.1" y="230" width="0.8" height="22" fill="#eeead2" opacity="1"/><rect x="128.1" y="223" width="0.8" height="40" fill="#eeead2" opacity="1"/><rect x="133.29999999999998" y="225" width="0.8" height="42.5" fill="#eeead2" opacity="1"/><rect x="77.8" y="298.95" width="76.00000000000001" height="2.1" fill="#900000" opacity="1"/><rect x="88.35000000000001" y="297" width="0.7" height="6" fill="#900000" opacity="1"/><rect x="95.25" y="297" width="0.7" height="6" fill="#900000" opacity="1"/><rect x="110.25" y="288" width="0.7" height="22" fill="#900000" opacity="1"/><rect x="128.15" y="281.5" width="0.7" height="40.5" fill="#900000" opacity="1"/><rect x="133.35" y="282" width="0.7" height="44" fill="#900000" opacity="1"/><rect x="379.5" y="206.05" width="75.5" height="1.9" fill="#c4961e" opacity="1"/><rect x="390.04999999999995" y="203" width="0.7" height="8" fill="#c4961e" opacity="1"/><rect x="396.25" y="204" width="0.7" height="7" fill="#c4961e" opacity="1"/><rect x="410.15" y="202" width="0.7" height="12" fill="#c4961e" opacity="1"/><rect x="411.84999999999997" y="192" width="0.7" height="27" fill="#c4961e" opacity="1"/><rect x="429.0" y="185" width="0.8" height="47" fill="#c4961e" opacity="1"/><rect x="434.8" y="187" width="0.8" height="51" fill="#c4961e" opacity="1"/><rect x="379.7" y="388" width="75.7" height="52.9" fill="#a36b5e"/><rect x="388.5" y="388" width="1.5" height="51.8" fill="#0a0a0a"/><rect x="401" y="388" width="1" height="51.8" fill="#0a0a0a"/><rect x="406.6" y="388" width="1.2999999999999545" height="51.8" fill="#0a0a0a"/><rect x="409.75" y="388" width="2.5" height="51.8" fill="#0a0a0a"/><rect x="418.2" y="388" width="1.3000000000000114" height="51.8" fill="#0a0a0a"/><rect x="421" y="388" width="1" height="51.8" fill="#0a0a0a"/><rect x="426" y="388" width="1.25" height="51.8" fill="#0a0a0a"/><rect x="429.1" y="388" width="2.5" height="51.8" fill="#0a0a0a"/><rect x="437.9" y="388" width="3.7000000000000455" height="51.8" fill="#0a0a0a"/><rect x="444.1" y="388" width="1.2999999999999545" height="51.8" fill="#0a0a0a"/><rect x="447.2" y="388" width="3.1000000000000227" height="51.8" fill="#0a0a0a"/><rect x="452.2" y="388" width="1.1999999999999886" height="51.8" fill="#0a0a0a"/><rect x="383.75" y="388" width="0.7" height="52.9" fill="#cf9c8e"/><rect x="402.65" y="388" width="0.7" height="52.9" fill="#cf9c8e"/><rect x="420.04999999999995" y="388" width="0.7" height="52.9" fill="#cf9c8e"/><rect x="427.54999999999995" y="388" width="0.7" height="52.9" fill="#cf9c8e"/><rect x="431.9" y="388" width="0.7" height="52.9" fill="#cf9c8e"/><rect x="441.84999999999997" y="388" width="0.7" height="52.9" fill="#cf9c8e"/><rect x="445.65" y="388" width="0.7" height="52.9" fill="#cf9c8e"/><rect x="450.65" y="388" width="0.7" height="52.9" fill="#cf9c8e"/><rect x="454.45" y="388" width="0.7" height="52.9" fill="#cf9c8e"/><rect x="66" y="46" width="2" height="49.5" fill="#e8952c"/><rect x="64.5" y="49.00" width="1.5" height="0.8" fill="#e8952c" opacity="0.6"/><rect x="64.5" y="52.55" width="1.5" height="0.8" fill="#e8952c" opacity="0.6"/><rect x="64.5" y="56.10" width="1.5" height="0.8" fill="#e8952c" opacity="0.6"/><rect x="64.5" y="59.65" width="1.5" height="0.8" fill="#e8952c" opacity="0.6"/><rect x="64.5" y="63.20" width="1.5" height="0.8" fill="#e8952c" opacity="0.6"/><rect x="64.5" y="66.75" width="1.5" height="0.8" fill="#e8952c" opacity="0.6"/><rect x="64.5" y="70.30" width="1.5" height="0.8" fill="#e8952c" opacity="0.6"/><rect x="64.5" y="73.85" width="1.5" height="0.8" fill="#e8952c" opacity="0.6"/><rect x="64.5" y="77.40" width="1.5" height="0.8" fill="#e8952c" opacity="0.6"/><rect x="64.5" y="80.95" width="1.5" height="0.8" fill="#e8952c" opacity="0.6"/><rect x="64.5" y="84.50" width="1.5" height="0.8" fill="#e8952c" opacity="0.6"/><rect x="64.5" y="88.05" width="1.5" height="0.8" fill="#e8952c" opacity="0.6"/><rect x="64.5" y="91.60" width="1.5" height="0.8" fill="#e8952c" opacity="0.6"/><rect x="66" y="104.4" width="2" height="49.5" fill="#e8952c"/><rect x="64.5" y="107.40" width="1.5" height="0.8" fill="#e8952c" opacity="0.6"/><rect x="64.5" y="110.95" width="1.5" height="0.8" fill="#e8952c" opacity="0.6"/><rect x="64.5" y="114.50" width="1.5" height="0.8" fill="#e8952c" opacity="0.6"/><rect x="64.5" y="118.05" width="1.5" height="0.8" fill="#e8952c" opacity="0.6"/><rect x="64.5" y="121.60" width="1.5" height="0.8" fill="#e8952c" opacity="0.6"/><rect x="64.5" y="125.15" width="1.5" height="0.8" fill="#e8952c" opacity="0.6"/><rect x="64.5" y="128.70" width="1.5" height="0.8" fill="#e8952c" opacity="0.6"/><rect x="64.5" y="132.25" width="1.5" height="0.8" fill="#e8952c" opacity="0.6"/><rect x="64.5" y="135.80" width="1.5" height="0.8" fill="#e8952c" opacity="0.6"/><rect x="64.5" y="139.35" width="1.5" height="0.8" fill="#e8952c" opacity="0.6"/><rect x="64.5" y="142.90" width="1.5" height="0.8" fill="#e8952c" opacity="0.6"/><rect x="64.5" y="146.45" width="1.5" height="0.8" fill="#e8952c" opacity="0.6"/><rect x="64.5" y="150.00" width="1.5" height="0.8" fill="#e8952c" opacity="0.6"/><rect x="66" y="162.5" width="2" height="49.5" fill="#e8952c"/><rect x="64.5" y="165.50" width="1.5" height="0.8" fill="#e8952c" opacity="0.6"/><rect x="64.5" y="169.05" width="1.5" height="0.8" fill="#e8952c" opacity="0.6"/><rect x="64.5" y="172.60" width="1.5" height="0.8" fill="#e8952c" opacity="0.6"/><rect x="64.5" y="176.15" width="1.5" height="0.8" fill="#e8952c" opacity="0.6"/><rect x="64.5" y="179.70" width="1.5" height="0.8" fill="#e8952c" opacity="0.6"/><rect x="64.5" y="183.25" width="1.5" height="0.8" fill="#e8952c" opacity="0.6"/><rect x="64.5" y="186.80" width="1.5" height="0.8" fill="#e8952c" opacity="0.6"/><rect x="64.5" y="190.35" width="1.5" height="0.8" fill="#e8952c" opacity="0.6"/><rect x="64.5" y="193.90" width="1.5" height="0.8" fill="#e8952c" opacity="0.6"/><rect x="64.5" y="197.45" width="1.5" height="0.8" fill="#e8952c" opacity="0.6"/><rect x="64.5" y="201.00" width="1.5" height="0.8" fill="#e8952c" opacity="0.6"/><rect x="64.5" y="204.55" width="1.5" height="0.8" fill="#e8952c" opacity="0.6"/><rect x="64.5" y="208.10" width="1.5" height="0.8" fill="#e8952c" opacity="0.6"/><rect x="66" y="221.2" width="2" height="49.5" fill="#e8952c"/><rect x="64.5" y="224.20" width="1.5" height="0.8" fill="#e8952c" opacity="0.6"/><rect x="64.5" y="227.75" width="1.5" height="0.8" fill="#e8952c" opacity="0.6"/><rect x="64.5" y="231.30" width="1.5" height="0.8" fill="#e8952c" opacity="0.6"/><rect x="64.5" y="234.85" width="1.5" height="0.8" fill="#e8952c" opacity="0.6"/><rect x="64.5" y="238.40" width="1.5" height="0.8" fill="#e8952c" opacity="0.6"/><rect x="64.5" y="241.95" width="1.5" height="0.8" fill="#e8952c" opacity="0.6"/><rect x="64.5" y="245.50" width="1.5" height="0.8" fill="#e8952c" opacity="0.6"/><rect x="64.5" y="249.05" width="1.5" height="0.8" fill="#e8952c" opacity="0.6"/><rect x="64.5" y="252.60" width="1.5" height="0.8" fill="#e8952c" opacity="0.6"/><rect x="64.5" y="256.15" width="1.5" height="0.8" fill="#e8952c" opacity="0.6"/><rect x="64.5" y="259.70" width="1.5" height="0.8" fill="#e8952c" opacity="0.6"/><rect x="64.5" y="263.25" width="1.5" height="0.8" fill="#e8952c" opacity="0.6"/><rect x="64.5" y="266.80" width="1.5" height="0.8" fill="#e8952c" opacity="0.6"/><rect x="66" y="279" width="2" height="49.5" fill="#e8952c"/><rect x="64.5" y="282.00" width="1.5" height="0.8" fill="#e8952c" opacity="0.6"/><rect x="64.5" y="285.55" width="1.5" height="0.8" fill="#e8952c" opacity="0.6"/><rect x="64.5" y="289.10" width="1.5" height="0.8" fill="#e8952c" opacity="0.6"/><rect x="64.5" y="292.65" width="1.5" height="0.8" fill="#e8952c" opacity="0.6"/><rect x="64.5" y="296.20" width="1.5" height="0.8" fill="#e8952c" opacity="0.6"/><rect x="64.5" y="299.75" width="1.5" height="0.8" fill="#e8952c" opacity="0.6"/><rect x="64.5" y="303.30" width="1.5" height="0.8" fill="#e8952c" opacity="0.6"/><rect x="64.5" y="306.85" width="1.5" height="0.8" fill="#e8952c" opacity="0.6"/><rect x="64.5" y="310.40" width="1.5" height="0.8" fill="#e8952c" opacity="0.6"/><rect x="64.5" y="313.95" width="1.5" height="0.8" fill="#e8952c" opacity="0.6"/><rect x="64.5" y="317.50" width="1.5" height="0.8" fill="#e8952c" opacity="0.6"/><rect x="64.5" y="321.05" width="1.5" height="0.8" fill="#e8952c" opacity="0.6"/><rect x="64.5" y="324.60" width="1.5" height="0.8" fill="#e8952c" opacity="0.6"/><rect x="66" y="337.3" width="2" height="49.5" fill="#e8952c"/><rect x="64.5" y="340.30" width="1.5" height="0.8" fill="#e8952c" opacity="0.6"/><rect x="64.5" y="343.85" width="1.5" height="0.8" fill="#e8952c" opacity="0.6"/><rect x="64.5" y="347.40" width="1.5" height="0.8" fill="#e8952c" opacity="0.6"/><rect x="64.5" y="350.95" width="1.5" height="0.8" fill="#e8952c" opacity="0.6"/><rect x="64.5" y="354.50" width="1.5" height="0.8" fill="#e8952c" opacity="0.6"/><rect x="64.5" y="358.05" width="1.5" height="0.8" fill="#e8952c" opacity="0.6"/><rect x="64.5" y="361.60" width="1.5" height="0.8" fill="#e8952c" opacity="0.6"/><rect x="64.5" y="365.15" width="1.5" height="0.8" fill="#e8952c" opacity="0.6"/><rect x="64.5" y="368.70" width="1.5" height="0.8" fill="#e8952c" opacity="0.6"/><rect x="64.5" y="372.25" width="1.5" height="0.8" fill="#e8952c" opacity="0.6"/><rect x="64.5" y="375.80" width="1.5" height="0.8" fill="#e8952c" opacity="0.6"/><rect x="64.5" y="379.35" width="1.5" height="0.8" fill="#e8952c" opacity="0.6"/><rect x="64.5" y="382.90" width="1.5" height="0.8" fill="#e8952c" opacity="0.6"/><rect x="66" y="395.8" width="2" height="49.5" fill="#e8952c"/><rect x="64.5" y="398.80" width="1.5" height="0.8" fill="#e8952c" opacity="0.6"/><rect x="64.5" y="402.35" width="1.5" height="0.8" fill="#e8952c" opacity="0.6"/><rect x="64.5" y="405.90" width="1.5" height="0.8" fill="#e8952c" opacity="0.6"/><rect x="64.5" y="409.45" width="1.5" height="0.8" fill="#e8952c" opacity="0.6"/><rect x="64.5" y="413.00" width="1.5" height="0.8" fill="#e8952c" opacity="0.6"/><rect x="64.5" y="416.55" width="1.5" height="0.8" fill="#e8952c" opacity="0.6"/><rect x="64.5" y="420.10" width="1.5" height="0.8" fill="#e8952c" opacity="0.6"/><rect x="64.5" y="423.65" width="1.5" height="0.8" fill="#e8952c" opacity="0.6"/><rect x="64.5" y="427.20" width="1.5" height="0.8" fill="#e8952c" opacity="0.6"/><rect x="64.5" y="430.75" width="1.5" height="0.8" fill="#e8952c" opacity="0.6"/><rect x="64.5" y="434.30" width="1.5" height="0.8" fill="#e8952c" opacity="0.6"/><rect x="64.5" y="437.85" width="1.5" height="0.8" fill="#e8952c" opacity="0.6"/><rect x="64.5" y="441.40" width="1.5" height="0.8" fill="#e8952c" opacity="0.6"/><rect x="66" y="444.1" width="279" height="2.1" fill="#e8952c"/><rect x="77.19999999999999" y="446.3" width="0.8" height="1.8" fill="#e8952c"/><rect x="105.19999999999999" y="446.3" width="0.8" height="1.8" fill="#e8952c"/><rect x="133.2" y="446.3" width="0.8" height="1.8" fill="#e8952c"/><rect x="161.2" y="446.3" width="0.8" height="1.8" fill="#e8952c"/><rect x="189.2" y="446.3" width="0.8" height="1.8" fill="#e8952c"/><rect x="217.2" y="446.3" width="0.8" height="1.8" fill="#e8952c"/><rect x="245.2" y="446.3" width="0.8" height="1.8" fill="#e8952c"/><rect x="273.20000000000005" y="446.3" width="0.8" height="1.8" fill="#e8952c"/><rect x="301.20000000000005" y="446.3" width="0.8" height="1.8" fill="#e8952c"/><rect x="329.20000000000005" y="446.3" width="0.8" height="1.8" fill="#e8952c"/><rect x="646" y="45.5" width="2" height="59.5" fill="#e8952c"/><rect x="648" y="48.50" width="1.5" height="0.8" fill="#e8952c" opacity="0.6"/><rect x="648" y="52.05" width="1.5" height="0.8" fill="#e8952c" opacity="0.6"/><rect x="648" y="55.60" width="1.5" height="0.8" fill="#e8952c" opacity="0.6"/><rect x="648" y="59.15" width="1.5" height="0.8" fill="#e8952c" opacity="0.6"/><rect x="648" y="62.70" width="1.5" height="0.8" fill="#e8952c" opacity="0.6"/><rect x="648" y="66.25" width="1.5" height="0.8" fill="#e8952c" opacity="0.6"/><rect x="648" y="69.80" width="1.5" height="0.8" fill="#e8952c" opacity="0.6"/><rect x="648" y="73.35" width="1.5" height="0.8" fill="#e8952c" opacity="0.6"/><rect x="648" y="76.90" width="1.5" height="0.8" fill="#e8952c" opacity="0.6"/><rect x="648" y="80.45" width="1.5" height="0.8" fill="#e8952c" opacity="0.6"/><rect x="648" y="84.00" width="1.5" height="0.8" fill="#e8952c" opacity="0.6"/><rect x="648" y="87.55" width="1.5" height="0.8" fill="#e8952c" opacity="0.6"/><rect x="648" y="91.10" width="1.5" height="0.8" fill="#e8952c" opacity="0.6"/><rect x="648" y="94.65" width="1.5" height="0.8" fill="#e8952c" opacity="0.6"/><rect x="648" y="98.20" width="1.5" height="0.8" fill="#e8952c" opacity="0.6"/><rect x="648" y="101.75" width="1.5" height="0.8" fill="#e8952c" opacity="0.6"/><rect x="646" y="114" width="2" height="61.599999999999994" fill="#e8952c"/><rect x="648" y="117.00" width="1.5" height="0.8" fill="#e8952c" opacity="0.6"/><rect x="648" y="120.55" width="1.5" height="0.8" fill="#e8952c" opacity="0.6"/><rect x="648" y="124.10" width="1.5" height="0.8" fill="#e8952c" opacity="0.6"/><rect x="648" y="127.65" width="1.5" height="0.8" fill="#e8952c" opacity="0.6"/><rect x="648" y="131.20" width="1.5" height="0.8" fill="#e8952c" opacity="0.6"/><rect x="648" y="134.75" width="1.5" height="0.8" fill="#e8952c" opacity="0.6"/><rect x="648" y="138.30" width="1.5" height="0.8" fill="#e8952c" opacity="0.6"/><rect x="648" y="141.85" width="1.5" height="0.8" fill="#e8952c" opacity="0.6"/><rect x="648" y="145.40" width="1.5" height="0.8" fill="#e8952c" opacity="0.6"/><rect x="648" y="148.95" width="1.5" height="0.8" fill="#e8952c" opacity="0.6"/><rect x="648" y="152.50" width="1.5" height="0.8" fill="#e8952c" opacity="0.6"/><rect x="648" y="156.05" width="1.5" height="0.8" fill="#e8952c" opacity="0.6"/><rect x="648" y="159.60" width="1.5" height="0.8" fill="#e8952c" opacity="0.6"/><rect x="648" y="163.15" width="1.5" height="0.8" fill="#e8952c" opacity="0.6"/><rect x="648" y="166.70" width="1.5" height="0.8" fill="#e8952c" opacity="0.6"/><rect x="648" y="170.25" width="1.5" height="0.8" fill="#e8952c" opacity="0.6"/><rect x="648" y="173.80" width="1.5" height="0.8" fill="#e8952c" opacity="0.6"/><rect x="646" y="182" width="2" height="59" fill="#e8952c"/><rect x="648" y="185.00" width="1.5" height="0.8" fill="#e8952c" opacity="0.6"/><rect x="648" y="188.55" width="1.5" height="0.8" fill="#e8952c" opacity="0.6"/><rect x="648" y="192.10" width="1.5" height="0.8" fill="#e8952c" opacity="0.6"/><rect x="648" y="195.65" width="1.5" height="0.8" fill="#e8952c" opacity="0.6"/><rect x="648" y="199.20" width="1.5" height="0.8" fill="#e8952c" opacity="0.6"/><rect x="648" y="202.75" width="1.5" height="0.8" fill="#e8952c" opacity="0.6"/><rect x="648" y="206.30" width="1.5" height="0.8" fill="#e8952c" opacity="0.6"/><rect x="648" y="209.85" width="1.5" height="0.8" fill="#e8952c" opacity="0.6"/><rect x="648" y="213.40" width="1.5" height="0.8" fill="#e8952c" opacity="0.6"/><rect x="648" y="216.95" width="1.5" height="0.8" fill="#e8952c" opacity="0.6"/><rect x="648" y="220.50" width="1.5" height="0.8" fill="#e8952c" opacity="0.6"/><rect x="648" y="224.05" width="1.5" height="0.8" fill="#e8952c" opacity="0.6"/><rect x="648" y="227.60" width="1.5" height="0.8" fill="#e8952c" opacity="0.6"/><rect x="648" y="231.15" width="1.5" height="0.8" fill="#e8952c" opacity="0.6"/><rect x="648" y="234.70" width="1.5" height="0.8" fill="#e8952c" opacity="0.6"/><rect x="648" y="238.25" width="1.5" height="0.8" fill="#e8952c" opacity="0.6"/><rect x="646" y="251" width="2" height="52.5" fill="#e8952c"/><rect x="648" y="254.00" width="1.5" height="0.8" fill="#e8952c" opacity="0.6"/><rect x="648" y="257.55" width="1.5" height="0.8" fill="#e8952c" opacity="0.6"/><rect x="648" y="261.10" width="1.5" height="0.8" fill="#e8952c" opacity="0.6"/><rect x="648" y="264.65" width="1.5" height="0.8" fill="#e8952c" opacity="0.6"/><rect x="648" y="268.20" width="1.5" height="0.8" fill="#e8952c" opacity="0.6"/><rect x="648" y="271.75" width="1.5" height="0.8" fill="#e8952c" opacity="0.6"/><rect x="648" y="275.30" width="1.5" height="0.8" fill="#e8952c" opacity="0.6"/><rect x="648" y="278.85" width="1.5" height="0.8" fill="#e8952c" opacity="0.6"/><rect x="648" y="282.40" width="1.5" height="0.8" fill="#e8952c" opacity="0.6"/><rect x="648" y="285.95" width="1.5" height="0.8" fill="#e8952c" opacity="0.6"/><rect x="648" y="289.50" width="1.5" height="0.8" fill="#e8952c" opacity="0.6"/><rect x="648" y="293.05" width="1.5" height="0.8" fill="#e8952c" opacity="0.6"/><rect x="648" y="296.60" width="1.5" height="0.8" fill="#e8952c" opacity="0.6"/><rect x="648" y="300.15" width="1.5" height="0.8" fill="#e8952c" opacity="0.6"/><rect x="646" y="318" width="2" height="58.5" fill="#e8952c"/><rect x="648" y="321.00" width="1.5" height="0.8" fill="#e8952c" opacity="0.6"/><rect x="648" y="324.55" width="1.5" height="0.8" fill="#e8952c" opacity="0.6"/><rect x="648" y="328.10" width="1.5" height="0.8" fill="#e8952c" opacity="0.6"/><rect x="648" y="331.65" width="1.5" height="0.8" fill="#e8952c" opacity="0.6"/><rect x="648" y="335.20" width="1.5" height="0.8" fill="#e8952c" opacity="0.6"/><rect x="648" y="338.75" width="1.5" height="0.8" fill="#e8952c" opacity="0.6"/><rect x="648" y="342.30" width="1.5" height="0.8" fill="#e8952c" opacity="0.6"/><rect x="648" y="345.85" width="1.5" height="0.8" fill="#e8952c" opacity="0.6"/><rect x="648" y="349.40" width="1.5" height="0.8" fill="#e8952c" opacity="0.6"/><rect x="648" y="352.95" width="1.5" height="0.8" fill="#e8952c" opacity="0.6"/><rect x="648" y="356.50" width="1.5" height="0.8" fill="#e8952c" opacity="0.6"/><rect x="648" y="360.05" width="1.5" height="0.8" fill="#e8952c" opacity="0.6"/><rect x="648" y="363.60" width="1.5" height="0.8" fill="#e8952c" opacity="0.6"/><rect x="648" y="367.15" width="1.5" height="0.8" fill="#e8952c" opacity="0.6"/><rect x="648" y="370.70" width="1.5" height="0.8" fill="#e8952c" opacity="0.6"/><rect x="648" y="374.25" width="1.5" height="0.8" fill="#e8952c" opacity="0.6"/><rect x="646" y="385" width="2" height="60" fill="#e8952c"/><rect x="648" y="388.00" width="1.5" height="0.8" fill="#e8952c" opacity="0.6"/><rect x="648" y="391.55" width="1.5" height="0.8" fill="#e8952c" opacity="0.6"/><rect x="648" y="395.10" width="1.5" height="0.8" fill="#e8952c" opacity="0.6"/><rect x="648" y="398.65" width="1.5" height="0.8" fill="#e8952c" opacity="0.6"/><rect x="648" y="402.20" width="1.5" height="0.8" fill="#e8952c" opacity="0.6"/><rect x="648" y="405.75" width="1.5" height="0.8" fill="#e8952c" opacity="0.6"/><rect x="648" y="409.30" width="1.5" height="0.8" fill="#e8952c" opacity="0.6"/><rect x="648" y="412.85" width="1.5" height="0.8" fill="#e8952c" opacity="0.6"/><rect x="648" y="416.40" width="1.5" height="0.8" fill="#e8952c" opacity="0.6"/><rect x="648" y="419.95" width="1.5" height="0.8" fill="#e8952c" opacity="0.6"/><rect x="648" y="423.50" width="1.5" height="0.8" fill="#e8952c" opacity="0.6"/><rect x="648" y="427.05" width="1.5" height="0.8" fill="#e8952c" opacity="0.6"/><rect x="648" y="430.60" width="1.5" height="0.8" fill="#e8952c" opacity="0.6"/><rect x="648" y="434.15" width="1.5" height="0.8" fill="#e8952c" opacity="0.6"/><rect x="648" y="437.70" width="1.5" height="0.8" fill="#e8952c" opacity="0.6"/><rect x="648" y="441.25" width="1.5" height="0.8" fill="#e8952c" opacity="0.6"/><rect x="368" y="444.1" width="280" height="2.1" fill="#e8952c"/><rect x="379.6" y="446.3" width="0.8" height="1.8" fill="#e8952c"/><rect x="407.15000000000003" y="446.3" width="0.8" height="1.8" fill="#e8952c"/><rect x="434.70000000000005" y="446.3" width="0.8" height="1.8" fill="#e8952c"/><rect x="462.25" y="446.3" width="0.8" height="1.8" fill="#e8952c"/><rect x="489.8" y="446.3" width="0.8" height="1.8" fill="#e8952c"/><rect x="517.35" y="446.3" width="0.8" height="1.8" fill="#e8952c"/><rect x="544.9" y="446.3" width="0.8" height="1.8" fill="#e8952c"/><rect x="572.45" y="446.3" width="0.8" height="1.8" fill="#e8952c"/><rect x="600.0" y="446.3" width="0.8" height="1.8" fill="#e8952c"/><rect x="627.5500000000001" y="446.3" width="0.8" height="1.8" fill="#e8952c"/><text x="60.4" y="73.89999999999999" font-size="5.9" fill="#d5892e" font-weight="normal" text-anchor="end" stroke="#d5892e" stroke-width="0.22" >0</text><text x="60.4" y="112.1" font-size="5.9" fill="#d5892e" font-weight="normal" text-anchor="end" stroke="#d5892e" stroke-width="0.22" >50</text><text x="60.4" y="130.2" font-size="5.9" fill="#d5892e" font-weight="normal" text-anchor="end" stroke="#d5892e" stroke-width="0.22" >0</text><text x="60.4" y="147.7" font-size="5.9" fill="#d5892e" font-weight="normal" text-anchor="end" stroke="#d5892e" stroke-width="0.22" >-50</text><text x="60.4" y="186.6" font-size="5.9" fill="#d5892e" font-weight="normal" text-anchor="end" stroke="#d5892e" stroke-width="0.22" >0</text><text x="60.4" y="211.6" font-size="5.9" fill="#d5892e" font-weight="normal" text-anchor="end" stroke="#d5892e" stroke-width="0.22" >-50</text><text x="60.4" y="244.1" font-size="5.9" fill="#d5892e" font-weight="normal" text-anchor="end" stroke="#d5892e" stroke-width="0.22" >0</text><text x="60.4" y="302.1" font-size="5.9" fill="#d5892e" font-weight="normal" text-anchor="end" stroke="#d5892e" stroke-width="0.22" >0</text><text x="60.4" y="365.1" font-size="5.9" fill="#d5892e" font-weight="normal" text-anchor="end" stroke="#d5892e" stroke-width="0.22" >0</text><text x="60.4" y="403.3" font-size="5.9" fill="#d5892e" font-weight="normal" text-anchor="end" stroke="#d5892e" stroke-width="0.22" >50</text><text x="60.4" y="420.90000000000003" font-size="5.9" fill="#d5892e" font-weight="normal" text-anchor="end" stroke="#d5892e" stroke-width="0.22" >0</text><text x="60.4" y="438.90000000000003" font-size="5.9" fill="#d5892e" font-weight="normal" text-anchor="end" stroke="#d5892e" stroke-width="0.22" >-50</text><text transform="translate(21.8,87.6) rotate(-90)" font-size="6.6" fill="#d5892e" stroke="#d5892e" stroke-width="0.18" textLength="37.4" lengthAdjust="spacingAndGlyphs">Amplitude</text><text x="16.2" y="53.8" font-size="6.3" fill="#d5892e" font-weight="normal" text-anchor="start" textLength="17.5" lengthAdjust="spacingAndGlyphs" stroke="#d5892e" stroke-width="0.18" >m/s^2</text><text transform="translate(21.8,146.0) rotate(-90)" font-size="6.6" fill="#d5892e" stroke="#d5892e" stroke-width="0.18" textLength="37.4" lengthAdjust="spacingAndGlyphs">Amplitude</text><text x="16.2" y="112.2" font-size="6.3" fill="#d5892e" font-weight="normal" text-anchor="start" textLength="17.5" lengthAdjust="spacingAndGlyphs" stroke="#d5892e" stroke-width="0.18" >m/s^2</text><text transform="translate(21.8,204.1) rotate(-90)" font-size="6.6" fill="#d5892e" stroke="#d5892e" stroke-width="0.18" textLength="37.4" lengthAdjust="spacingAndGlyphs">Amplitude</text><text x="16.2" y="170.3" font-size="6.3" fill="#d5892e" font-weight="normal" text-anchor="start" textLength="17.5" lengthAdjust="spacingAndGlyphs" stroke="#d5892e" stroke-width="0.18" >m/s^2</text><text transform="translate(21.8,262.8) rotate(-90)" font-size="6.6" fill="#d5892e" stroke="#d5892e" stroke-width="0.18" textLength="37.4" lengthAdjust="spacingAndGlyphs">Amplitude</text><text x="16.2" y="229.0" font-size="6.3" fill="#d5892e" font-weight="normal" text-anchor="start" textLength="17.5" lengthAdjust="spacingAndGlyphs" stroke="#d5892e" stroke-width="0.18" >m/s^2</text><text transform="translate(21.8,320.6) rotate(-90)" font-size="6.6" fill="#d5892e" stroke="#d5892e" stroke-width="0.18" textLength="37.4" lengthAdjust="spacingAndGlyphs">Amplitude</text><text x="16.2" y="286.8" font-size="6.3" fill="#d5892e" font-weight="normal" text-anchor="start" textLength="17.5" lengthAdjust="spacingAndGlyphs" stroke="#d5892e" stroke-width="0.18" >m/s^2</text><text transform="translate(21.8,378.90000000000003) rotate(-90)" font-size="6.6" fill="#d5892e" stroke="#d5892e" stroke-width="0.18" textLength="37.4" lengthAdjust="spacingAndGlyphs">Amplitude</text><text x="16.2" y="345.1" font-size="6.3" fill="#d5892e" font-weight="normal" text-anchor="start" textLength="17.5" lengthAdjust="spacingAndGlyphs" stroke="#d5892e" stroke-width="0.18" >m/s^2</text><text transform="translate(21.8,437.40000000000003) rotate(-90)" font-size="6.6" fill="#d5892e" stroke="#d5892e" stroke-width="0.18" textLength="37.4" lengthAdjust="spacingAndGlyphs">Amplitude</text><text x="16.2" y="403.6" font-size="6.3" fill="#d5892e" font-weight="normal" text-anchor="start" textLength="17.5" lengthAdjust="spacingAndGlyphs" stroke="#d5892e" stroke-width="0.18" >m/s^2</text><text x="652.5" y="74.1" font-size="5.9" fill="#d5892e" font-weight="normal" text-anchor="start" stroke="#d5892e" stroke-width="0.22" >0</text><text x="652.5" y="104.6" font-size="5.9" fill="#d5892e" font-weight="normal" text-anchor="start" stroke="#d5892e" stroke-width="0.22" >-50</text><text x="652.5" y="142.1" font-size="5.9" fill="#d5892e" font-weight="normal" text-anchor="start" stroke="#d5892e" stroke-width="0.22" >0</text><text x="652.5" y="172.6" font-size="5.9" fill="#d5892e" font-weight="normal" text-anchor="start" stroke="#d5892e" stroke-width="0.22" >-50</text><text x="652.5" y="209.1" font-size="5.9" fill="#d5892e" font-weight="normal" text-anchor="start" stroke="#d5892e" stroke-width="0.22" >0</text><text x="652.5" y="263.1" font-size="5.9" fill="#d5892e" font-weight="normal" text-anchor="start" stroke="#d5892e" stroke-width="0.22" >100</text><text x="652.5" y="282.1" font-size="5.9" fill="#d5892e" font-weight="normal" text-anchor="start" stroke="#d5892e" stroke-width="0.22" >0</text><text x="652.5" y="300.90000000000003" font-size="5.9" fill="#d5892e" font-weight="normal" text-anchor="start" stroke="#d5892e" stroke-width="0.22" >-100</text><text x="652.5" y="326.6" font-size="5.9" fill="#d5892e" font-weight="normal" text-anchor="start" stroke="#d5892e" stroke-width="0.22" >50</text><text x="652.5" y="347.90000000000003" font-size="5.9" fill="#d5892e" font-weight="normal" text-anchor="start" stroke="#d5892e" stroke-width="0.22" >0</text><text x="652.5" y="369.6" font-size="5.9" fill="#d5892e" font-weight="normal" text-anchor="start" stroke="#d5892e" stroke-width="0.22" >-50</text><text x="652.5" y="394.6" font-size="5.9" fill="#d5892e" font-weight="normal" text-anchor="start" stroke="#d5892e" stroke-width="0.22" >1805</text><text x="652.5" y="410.6" font-size="5.9" fill="#d5892e" font-weight="normal" text-anchor="start" stroke="#d5892e" stroke-width="0.22" >1800</text><text x="652.5" y="426.1" font-size="5.9" fill="#d5892e" font-weight="normal" text-anchor="start" stroke="#d5892e" stroke-width="0.22" >1795</text><text x="652.5" y="441.3" font-size="5.9" fill="#d5892e" font-weight="normal" text-anchor="start" stroke="#d5892e" stroke-width="0.22" >1790</text><text x="677.3" y="53.5" font-size="6.3" fill="#d5892e" font-weight="normal" text-anchor="start" textLength="18" lengthAdjust="spacingAndGlyphs" stroke="#d5892e" stroke-width="0.18" >m/s^2</text><text transform="translate(692.2,75.1) rotate(-90)" font-size="6.6" fill="#d5892e" stroke="#d5892e" stroke-width="0.18" text-anchor="middle" textLength="34.5" lengthAdjust="spacingAndGlyphs">Amplitude</text><text x="677.3" y="121.8" font-size="6.3" fill="#d5892e" font-weight="normal" text-anchor="start" textLength="18" lengthAdjust="spacingAndGlyphs" stroke="#d5892e" stroke-width="0.18" >m/s^2</text><text transform="translate(692.2,143.4) rotate(-90)" font-size="6.6" fill="#d5892e" stroke="#d5892e" stroke-width="0.18" text-anchor="middle" textLength="34.5" lengthAdjust="spacingAndGlyphs">Amplitude</text><text x="677.3" y="189.5" font-size="6.3" fill="#d5892e" font-weight="normal" text-anchor="start" textLength="18" lengthAdjust="spacingAndGlyphs" stroke="#d5892e" stroke-width="0.18" >m/s^2</text><text transform="translate(692.2,210.9) rotate(-90)" font-size="6.6" fill="#d5892e" stroke="#d5892e" stroke-width="0.18" text-anchor="middle" textLength="34.5" lengthAdjust="spacingAndGlyphs">Amplitude</text><text x="677.3" y="257.7" font-size="6.3" fill="#d5892e" font-weight="normal" text-anchor="start" textLength="18" lengthAdjust="spacingAndGlyphs" stroke="#d5892e" stroke-width="0.18" >m/s^2</text><text transform="translate(692.2,279.4) rotate(-90)" font-size="6.6" fill="#d5892e" stroke="#d5892e" stroke-width="0.18" text-anchor="middle" textLength="34.5" lengthAdjust="spacingAndGlyphs">Amplitude</text><text x="677.3" y="325.1" font-size="6.3" fill="#d5892e" font-weight="normal" text-anchor="start" textLength="18" lengthAdjust="spacingAndGlyphs" stroke="#d5892e" stroke-width="0.18" >m/s^2</text><text transform="translate(692.2,346.6) rotate(-90)" font-size="6.6" fill="#d5892e" stroke="#d5892e" stroke-width="0.18" text-anchor="middle" textLength="34.5" lengthAdjust="spacingAndGlyphs">Amplitude</text><text x="677.4" y="393.2" font-size="6.3" fill="#d5892e" font-weight="normal" text-anchor="start" textLength="16" lengthAdjust="spacingAndGlyphs" stroke="#d5892e" stroke-width="0.18" >1/min</text><text transform="translate(692.3,415) rotate(-90)" font-size="7.2" fill="#d5892e" stroke="#d5892e" stroke-width="0.18" text-anchor="middle" textLength="30" lengthAdjust="spacingAndGlyphs">Drehzahl</text><text x="78" y="458.2" font-size="5.9" fill="#d5892e" font-weight="normal" text-anchor="middle" textLength="22.3" lengthAdjust="spacingAndGlyphs" stroke="#d5892e" stroke-width="0.15" >00:00:00</text><text x="217.5" y="458.2" font-size="5.9" fill="#d5892e" font-weight="normal" text-anchor="middle" textLength="22.3" lengthAdjust="spacingAndGlyphs" stroke="#d5892e" stroke-width="0.15" >00:00:05</text><text x="380" y="458.2" font-size="5.9" fill="#d5892e" font-weight="normal" text-anchor="middle" textLength="22.3" lengthAdjust="spacingAndGlyphs" stroke="#d5892e" stroke-width="0.15" >00:00:00</text><text x="517.7" y="458.2" font-size="5.9" fill="#d5892e" font-weight="normal" text-anchor="middle" textLength="22.3" lengthAdjust="spacingAndGlyphs" stroke="#d5892e" stroke-width="0.15" >00:00:05</text><text x="206.2" y="467.2" font-size="7.6" fill="#d5892e" font-weight="normal" text-anchor="middle" textLength="12.8" lengthAdjust="spacingAndGlyphs" stroke="#d5892e" stroke-width="0.1" >Zeit</text><text x="506.5" y="467.2" font-size="7.6" fill="#d5892e" font-weight="normal" text-anchor="middle" textLength="12.8" lengthAdjust="spacingAndGlyphs" stroke="#d5892e" stroke-width="0.1" >Zeit</text><rect x="761" y="38.3" width="23.6" height="23.3" fill="#2b2b2b"/><circle cx="715.8" cy="49.8" r="11.1" fill="none" stroke="#d6d6d6" stroke-width="1.5"/><circle cx="744.2" cy="49.8" r="11.1" fill="none" stroke="#d6d6d6" stroke-width="1.5"/><circle cx="772.9" cy="49.8" r="11.1" fill="none" stroke="#d6d6d6" stroke-width="1.5"/><path d="M710.8 49.8 H722.2 M716.4 43.8 L710.6 49.8 L716.4 55.8" fill="none" stroke="#d8d8d8" stroke-width="1.8"/><path d="M766.6 49.8 H778 M772.2 43.8 L778 49.8 L772.2 55.8" fill="none" stroke="#d8d8d8" stroke-width="1.8"/><path d="M737.3 50.6 L744.2 44.3 L751.2 50.6" fill="none" stroke="#d8d8d8" stroke-width="1.9"/><path d="M740.2 49.3 V55.4 H748.3 V49.3" fill="none" stroke="#d8d8d8" stroke-width="1.7"/><rect x="742.9" y="51.6" width="2.7" height="4.4" fill="#d8d8d8"/><rect x="747.7" y="44.2" width="1.7" height="3.6" fill="#d8d8d8"/><circle cx="730.1" cy="64.9" r="0.8" fill="#0c0c0c"/><circle cx="737.1" cy="64.9" r="0.8" fill="#0c0c0c"/><circle cx="744.2" cy="64.9" r="1.3" fill="#0c0c0c"/><circle cx="751.2" cy="64.9" r="0.8" fill="#0c0c0c"/><circle cx="757.9" cy="64.9" r="0.8" fill="#0c0c0c"/><rect x="701" y="68.40" width="86.4" height="24" fill="#c8955a"/><rect x="702" y="69.40" width="84.4" height="22" fill="#4e3214"/><rect x="703" y="70.40" width="82.4" height="20" fill="#f78b12"/><rect x="707" y="79.90" width="9.5" height="4.4" fill="#ffff00"/><text x="719.2" y="85.0" font-size="7.2" fill="#38240a" font-weight="bold" text-anchor="start" textLength="24.8" lengthAdjust="spacingAndGlyphs" stroke="#38240a" stroke-width="0.25">Sensor1</text><rect x="701" y="94.12" width="86.4" height="24" fill="#c8955a"/><rect x="702" y="95.12" width="84.4" height="22" fill="#4e3214"/><rect x="703" y="96.12" width="82.4" height="20" fill="#f78b12"/><rect x="707" y="105.62" width="9.5" height="4.4" fill="#008000"/><text x="719.2" y="110.72" font-size="7.2" fill="#38240a" font-weight="bold" text-anchor="start" textLength="24.8" lengthAdjust="spacingAndGlyphs" stroke="#38240a" stroke-width="0.25">Sensor2</text><rect x="701" y="119.84" width="86.4" height="24" fill="#c8955a"/><rect x="702" y="120.84" width="84.4" height="22" fill="#4e3214"/><rect x="703" y="121.84" width="82.4" height="20" fill="#f78b12"/><rect x="707" y="131.34" width="9.5" height="4.4" fill="#0000ff"/><text x="719.2" y="136.44" font-size="7.2" fill="#38240a" font-weight="bold" text-anchor="start" textLength="24.8" lengthAdjust="spacingAndGlyphs" stroke="#38240a" stroke-width="0.25">Sensor3</text><rect x="701" y="145.56" width="86.4" height="24" fill="#c8955a"/><rect x="702" y="146.56" width="84.4" height="22" fill="#4e3214"/><rect x="703" y="147.56" width="82.4" height="20" fill="#f78b12"/><rect x="707" y="157.06" width="9.5" height="4.4" fill="#fffbe6"/><text x="719.2" y="162.16" font-size="7.2" fill="#38240a" font-weight="bold" text-anchor="start" textLength="24.8" lengthAdjust="spacingAndGlyphs" stroke="#38240a" stroke-width="0.25">Sensor4</text><rect x="701" y="171.28" width="86.4" height="24" fill="#c8955a"/><rect x="702" y="172.28" width="84.4" height="22" fill="#4e3214"/><rect x="703" y="173.28" width="82.4" height="20" fill="#f78b12"/><rect x="707" y="182.78" width="9.5" height="4.4" fill="#8b0000"/><text x="719.2" y="187.88" font-size="7.2" fill="#38240a" font-weight="bold" text-anchor="start" textLength="24.8" lengthAdjust="spacingAndGlyphs" stroke="#38240a" stroke-width="0.25">Sensor5</text><rect x="701" y="197.00" width="86.4" height="24" fill="#c8955a"/><rect x="702" y="198.00" width="84.4" height="22" fill="#4e3214"/><rect x="703" y="199.00" width="82.4" height="20" fill="#f78b12"/><rect x="707" y="208.50" width="9.5" height="4.4" fill="#b0eeee"/><text x="719.2" y="213.6" font-size="7.2" fill="#38240a" font-weight="bold" text-anchor="start" textLength="24.8" lengthAdjust="spacingAndGlyphs" stroke="#38240a" stroke-width="0.25">Sensor6</text><rect x="701" y="222.72" width="86.4" height="24" fill="#c8955a"/><rect x="702" y="223.72" width="84.4" height="22" fill="#4e3214"/><rect x="703" y="224.72" width="82.4" height="20" fill="#f78b12"/><rect x="707" y="234.22" width="9.5" height="4.4" fill="#fa8072"/><text x="719.2" y="239.32" font-size="7.2" fill="#38240a" font-weight="bold" text-anchor="start" textLength="24.8" lengthAdjust="spacingAndGlyphs" stroke="#38240a" stroke-width="0.25">Sensor7</text><rect x="701" y="248.44" width="86.4" height="24" fill="#c8955a"/><rect x="702" y="249.44" width="84.4" height="22" fill="#4e3214"/><rect x="703" y="250.44" width="82.4" height="20" fill="#f78b12"/><rect x="707" y="259.94" width="9.5" height="4.4" fill="#ffffff"/><text x="719.2" y="265.04" font-size="7.2" fill="#38240a" font-weight="bold" text-anchor="start" textLength="24.8" lengthAdjust="spacingAndGlyphs" stroke="#38240a" stroke-width="0.25">Sensor8</text><rect x="701" y="274.16" width="86.4" height="24" fill="#c8955a"/><rect x="702" y="275.16" width="84.4" height="22" fill="#4e3214"/><rect x="703" y="276.16" width="82.4" height="20" fill="#f78b12"/><rect x="707" y="285.66" width="9.5" height="4.4" fill="#dc143c"/><text x="719.2" y="290.76" font-size="7.2" fill="#38240a" font-weight="bold" text-anchor="start" textLength="24.8" lengthAdjust="spacingAndGlyphs" stroke="#38240a" stroke-width="0.25">Sensor9</text><rect x="701" y="299.88" width="86.4" height="24" fill="#c8955a"/><rect x="702" y="300.88" width="84.4" height="22" fill="#4e3214"/><rect x="703" y="301.88" width="82.4" height="20" fill="#f78b12"/><rect x="707" y="311.38" width="9.5" height="4.4" fill="#b8a030"/><text x="719.2" y="316.48" font-size="7.2" fill="#38240a" font-weight="bold" text-anchor="start" textLength="28.5" lengthAdjust="spacingAndGlyphs" stroke="#38240a" stroke-width="0.25">Sensor10</text><rect x="701" y="325.60" width="86.4" height="24" fill="#c8955a"/><rect x="702" y="326.60" width="84.4" height="22" fill="#4e3214"/><rect x="703" y="327.60" width="82.4" height="20" fill="#f78b12"/><rect x="707" y="337.10" width="9.5" height="4.4" fill="#707070"/><text x="719.2" y="342.20000000000005" font-size="7.2" fill="#38240a" font-weight="bold" text-anchor="start" textLength="28.5" lengthAdjust="spacingAndGlyphs" stroke="#38240a" stroke-width="0.25">Sensor11</text><rect x="701" y="351.32" width="86.4" height="24" fill="#c8955a"/><rect x="702" y="352.32" width="84.4" height="22" fill="#4e3214"/><rect x="703" y="353.32" width="82.4" height="20" fill="#f78b12"/><rect x="707" y="362.82" width="9.5" height="4.4" fill="#ffffff"/><text x="719.2" y="367.91999999999996" font-size="7.2" fill="#38240a" font-weight="bold" text-anchor="start" textLength="28.5" lengthAdjust="spacingAndGlyphs" stroke="#38240a" stroke-width="0.25">Sensor12</text><rect x="701" y="377.04" width="86.4" height="24" fill="#c8955a"/><rect x="702" y="378.04" width="84.4" height="22" fill="#4e3214"/><rect x="703" y="379.04" width="82.4" height="20" fill="#f78b12"/><rect x="707" y="388.54" width="9.5" height="4.4" fill="#ffb0a8"/><text x="719.2" y="393.64" font-size="7.2" fill="#38240a" font-weight="bold" text-anchor="start" textLength="31" lengthAdjust="spacingAndGlyphs" stroke="#38240a" stroke-width="0.25">Drehzahl1</text><radialGradient id="sg" cx="0.82" cy="0.12" r="1.0" fx="0.82" fy="0.12"><stop offset="0" stop-color="#c0c8c0"/><stop offset="0.28" stop-color="#6a9f6a"/><stop offset="0.55" stop-color="#237523"/><stop offset="1" stop-color="#0d5010"/></radialGradient><circle cx="744.7" cy="440.6" r="25.3" fill="url(#sg)"/><radialGradient id="sv" cx="0.5" cy="0.5" r="0.5"><stop offset="0.7" stop-color="#000" stop-opacity="0"/><stop offset="1" stop-color="#000" stop-opacity="0.28"/></radialGradient><circle cx="744.7" cy="440.6" r="25.3" fill="url(#sv)"/><path d="M744.70 413.00 A27.6 27.6 0 0 1 766.45 423.61" fill="none" stroke="#1d8fd2" stroke-width="3.8"/><text x="744.6" y="439.4" font-size="9.8" fill="#f0f0f0" font-weight="bold" text-anchor="middle" textLength="18.5" lengthAdjust="spacingAndGlyphs" >Stop</text><text x="744.4" y="449.8" font-size="8.8" fill="#c4d8c4" font-weight="normal" text-anchor="middle" textLength="19.7" lengthAdjust="spacingAndGlyphs" >2,72 s</text></svg></body></html>
